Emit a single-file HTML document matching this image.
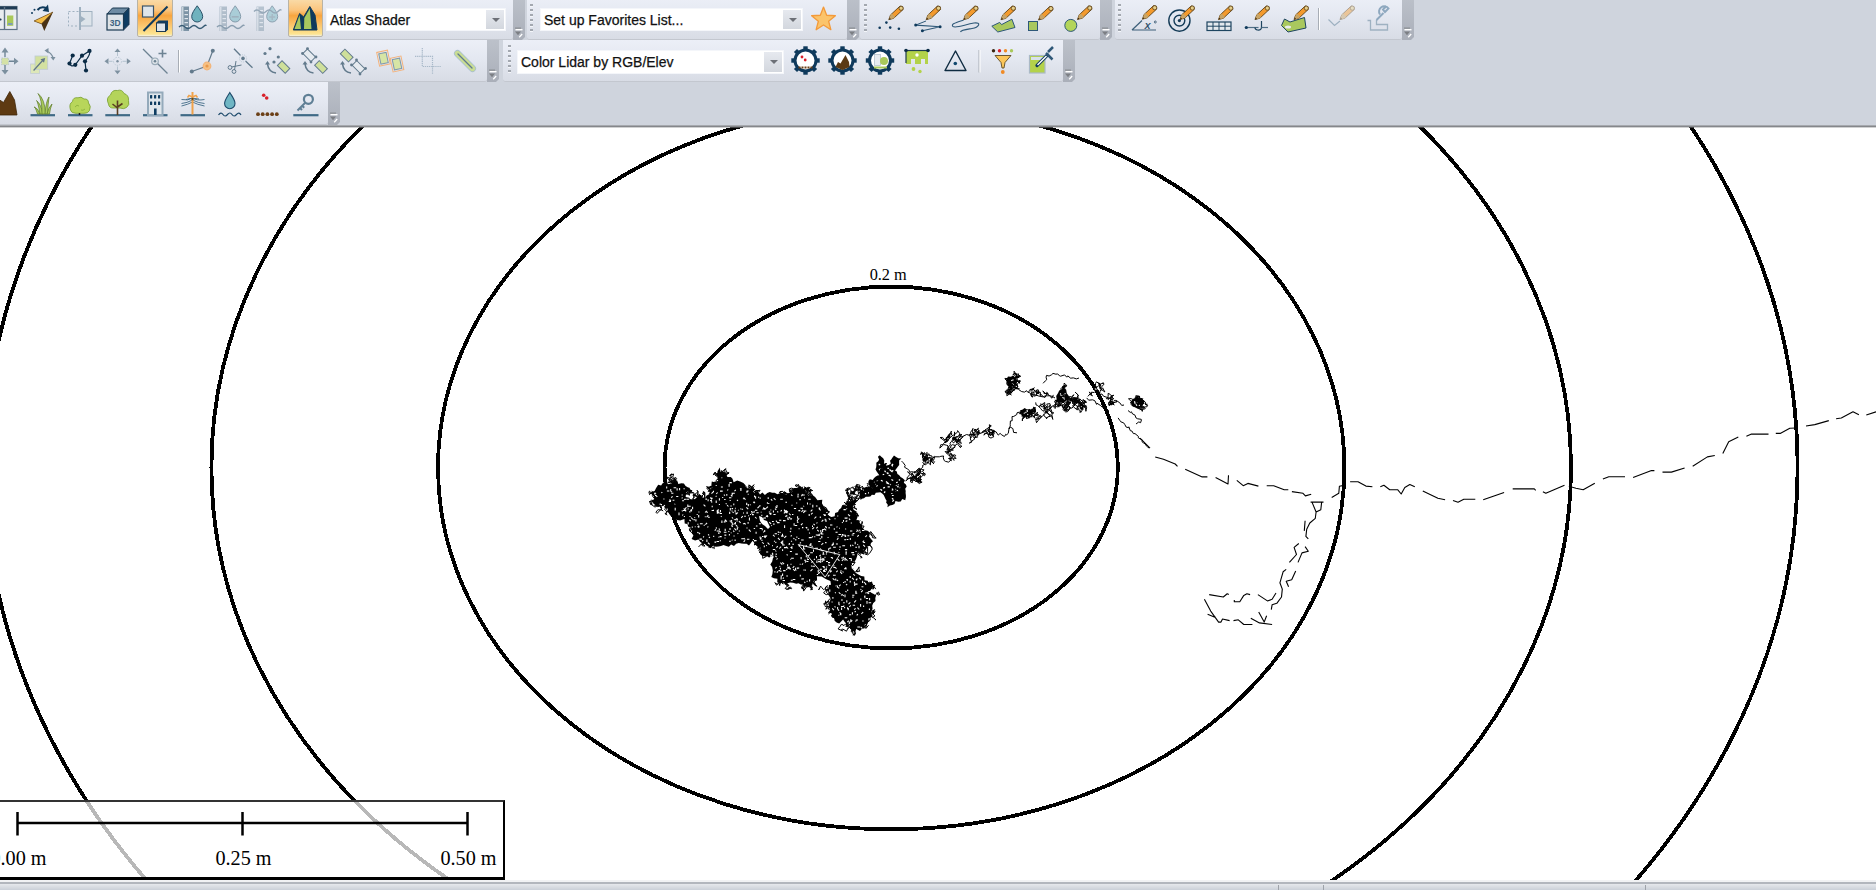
<!DOCTYPE html><html><head><meta charset="utf-8"><style>
*{margin:0;padding:0;box-sizing:border-box}
html,body{width:1876px;height:890px;overflow:hidden;background:#cfd4dd;font-family:"Liberation Sans",sans-serif}
.abs{position:absolute}
.tb{position:absolute;background:linear-gradient(#eceff7,#e4e8f1 45%,#d8dce5);border-bottom:1px solid #c3c7cf;border-radius:0 0 3px 3px}
.chev{position:absolute;background:linear-gradient(#bcc1ca,#aaafb9);clip-path:polygon(0 0,100% 0,100% calc(100% - 3px),calc(100% - 3px) 100%,0 100%)}
.chev svg{position:absolute;left:0;bottom:0}
.grip{position:absolute;width:3px;background:repeating-linear-gradient(#a3a8b0 0 2px,#f4f6fa 2px 3px,transparent 3px 5px)}
.combo{position:absolute;background:#fff;border:1px solid #f4f6fa}
.combo span{position:absolute;left:3px;top:3px;font-size:14px;-webkit-text-stroke:0.25px #111;color:#111;white-space:nowrap}
.combo i{position:absolute;right:1px;top:1px;bottom:1px;width:18px;background:linear-gradient(#e6e9ef,#d3d7de)}
.combo i:after{content:"";position:absolute;left:6px;top:8px;border-left:4px solid transparent;border-right:4px solid transparent;border-top:4px solid #6d7077}
.sep{position:absolute;width:1px;background:#b9bec6;border-right:1px solid #fff}
</style></head><body>
<div class="tb" style="left:-10px;top:-3px;width:523px;height:43px"></div><div class="chev" style="left:513px;top:-3px;width:12px;height:43px"><svg width="12" height="14" viewBox="0 0 12 14"><rect x="2" y="1.5" width="6" height="1.2" fill="#8a8d92"/><rect x="2.5" y="3" width="7" height="1.4" fill="#fff"/><polygon points="2,5.5 8,5.5 5,9.2" fill="#7c7f84"/><path d="M6.2,11.2 L9.2,8" stroke="#fff" stroke-width="1.3"/></svg></div><div class="tb" style="left:527px;top:-3px;width:320px;height:43px"></div><div class="chev" style="left:847px;top:-3px;width:12px;height:43px"><svg width="12" height="14" viewBox="0 0 12 14"><rect x="2" y="1.5" width="6" height="1.2" fill="#8a8d92"/><rect x="2.5" y="3" width="7" height="1.4" fill="#fff"/><polygon points="2,5.5 8,5.5 5,9.2" fill="#7c7f84"/><path d="M6.2,11.2 L9.2,8" stroke="#fff" stroke-width="1.3"/></svg></div><div class="tb" style="left:860px;top:-3px;width:240px;height:43px"></div><div class="chev" style="left:1100px;top:-3px;width:12px;height:43px"><svg width="12" height="14" viewBox="0 0 12 14"><rect x="2" y="1.5" width="6" height="1.2" fill="#8a8d92"/><rect x="2.5" y="3" width="7" height="1.4" fill="#fff"/><polygon points="2,5.5 8,5.5 5,9.2" fill="#7c7f84"/><path d="M6.2,11.2 L9.2,8" stroke="#fff" stroke-width="1.3"/></svg></div><div class="tb" style="left:1115px;top:-3px;width:287px;height:43px"></div><div class="chev" style="left:1402px;top:-3px;width:12px;height:43px"><svg width="12" height="14" viewBox="0 0 12 14"><rect x="2" y="1.5" width="6" height="1.2" fill="#8a8d92"/><rect x="2.5" y="3" width="7" height="1.4" fill="#fff"/><polygon points="2,5.5 8,5.5 5,9.2" fill="#7c7f84"/><path d="M6.2,11.2 L9.2,8" stroke="#fff" stroke-width="1.3"/></svg></div><div class="tb" style="left:-10px;top:40px;width:497px;height:42px"></div><div class="chev" style="left:487px;top:40px;width:12px;height:42px"><svg width="12" height="14" viewBox="0 0 12 14"><rect x="2" y="1.5" width="6" height="1.2" fill="#8a8d92"/><rect x="2.5" y="3" width="7" height="1.4" fill="#fff"/><polygon points="2,5.5 8,5.5 5,9.2" fill="#7c7f84"/><path d="M6.2,11.2 L9.2,8" stroke="#fff" stroke-width="1.3"/></svg></div><div class="tb" style="left:503px;top:40px;width:560px;height:42px"></div><div class="chev" style="left:1063px;top:40px;width:12px;height:42px"><svg width="12" height="14" viewBox="0 0 12 14"><rect x="2" y="1.5" width="6" height="1.2" fill="#8a8d92"/><rect x="2.5" y="3" width="7" height="1.4" fill="#fff"/><polygon points="2,5.5 8,5.5 5,9.2" fill="#7c7f84"/><path d="M6.2,11.2 L9.2,8" stroke="#fff" stroke-width="1.3"/></svg></div><div class="tb" style="left:-10px;top:82px;width:338px;height:43px"></div><div class="chev" style="left:328px;top:82px;width:12px;height:43px"><svg width="12" height="14" viewBox="0 0 12 14"><rect x="2" y="1.5" width="6" height="1.2" fill="#8a8d92"/><rect x="2.5" y="3" width="7" height="1.4" fill="#fff"/><polygon points="2,5.5 8,5.5 5,9.2" fill="#7c7f84"/><path d="M6.2,11.2 L9.2,8" stroke="#fff" stroke-width="1.3"/></svg></div><div class="grip" style="left:530px;top:4px;height:29px"></div><div class="grip" style="left:864px;top:4px;height:29px"></div><div class="grip" style="left:1118px;top:4px;height:29px"></div><div class="grip" style="left:508px;top:45px;height:30px"></div><div class="combo" style="left:326px;top:8px;width:180px;height:23px"><span>Atlas Shader</span><i></i></div><div class="combo" style="left:540px;top:8px;width:263px;height:23px"><span>Set up Favorites List...</span><i></i></div><div class="combo" style="left:517px;top:50px;width:267px;height:24px"><span>Color Lidar by RGB/Elev</span><i></i></div><div class="abs" style="left:137px;top:-2px;width:36px;height:38.5px;border:1px solid #b9b3a5;border-radius:2px;background:linear-gradient(#f9dcaa,#fbc57e 30%,#f8a53f 45%,#fbc46c 70%,#fde591 95%,#f3f0e4)"></div><div class="abs" style="left:287.5px;top:-2px;width:35.5px;height:38.5px;border:1px solid #b9b3a5;border-radius:2px;background:linear-gradient(#f9dcaa,#fbc57e 30%,#f8a53f 45%,#fbc46c 70%,#fde591 95%,#f3f0e4)"></div><svg class="abs" style="left:0;top:0" width="1876" height="127" viewBox="0 0 1876 127"><rect x="-3" y="6.5" width="20" height="23" fill="#e9edf0" stroke="#5f7385" stroke-width="1.2"/><rect x="-3" y="6.5" width="20" height="3" fill="#1f3b55"/><line x1="4.5" y1="7" x2="4.5" y2="29.5" stroke="#5f7385" stroke-width="1.4"/><rect x="7" y="15.5" width="6.3" height="10.3" fill="#a9c95a"/><rect x="8" y="23" width="4.5" height="2" fill="#7d9fb5"/><circle cx="0.5" cy="19.5" r="1.1" fill="#1f3b55"/><polygon points="53,12 34,21 41.5,24 44.3,31" fill="#4a3215"/><polygon points="53,12 34,21 41.5,23.8" fill="#f3bd48" stroke="#6b4a1c" stroke-width="0.6"/><path d="M37.5,10 Q41,6 46,8" fill="none" stroke="#0f3a5c" stroke-width="2"/><polygon points="48,4.5 49,12 42.5,11" fill="#0f3a5c"/><circle cx="32" cy="13" r="1" fill="#0f3a5c"/><circle cx="34.5" cy="9.8" r="1" fill="#0f3a5c"/><rect x="68.5" y="11.5" width="11" height="14.5" fill="none" stroke="#9fb1c0" stroke-width="1" stroke-dasharray="2,2"/><rect x="80.5" y="11.5" width="11.5" height="14.5" fill="#dde4ea" stroke="#9fb1c0" stroke-width="1"/><line x1="80" y1="7" x2="80" y2="30" stroke="#9fb1c0" stroke-width="2"/><polygon points="80,15.5 85.5,19 80,23" fill="#9fb1c0"/><polygon points="107,14 112.5,8 129,8 123.5,14" fill="#6d8ba3" stroke="#1c3a52" stroke-width="1"/><polygon points="123.5,14 129,8 129,24.5 123.5,30" fill="#0f3d62" stroke="#1c3a52" stroke-width="1"/><rect x="107" y="14" width="16.5" height="16" fill="#dde3e8" stroke="#1c3a52" stroke-width="1.2"/><text x="115.2" y="26" font-family="Liberation Sans" font-size="8.5" font-weight="bold" text-anchor="middle" fill="#3c6383">3D</text><rect x="142.5" y="6" width="11" height="11" fill="#dfe5ea" stroke="#3c5569" stroke-width="1.2"/><line x1="143.5" y1="31" x2="167.5" y2="6.5" stroke="#0f3a5c" stroke-width="2"/><polygon points="156,23 158.5,20.5 168,20.5 168,29.5 165.5,32 156,32" fill="#0f3d62"/><rect x="156.5" y="23" width="9" height="8.5" fill="#dfe5ea" stroke="#1c3a52" stroke-width="1"/><g opacity="1.0"><rect x="181.5" y="6.5" width="7.5" height="24.5" fill="#7d94a6"/><rect x="182.2" y="7" width="1.2" height="24" fill="#dfe6ec"/><rect x="184.5" y="10" width="3.5" height="1.2" fill="#dfe6ec"/><rect x="184.5" y="14" width="3.5" height="1.2" fill="#dfe6ec"/><rect x="184.5" y="18" width="3.5" height="1.2" fill="#dfe6ec"/><rect x="184.5" y="22" width="3.5" height="1.2" fill="#dfe6ec"/><rect x="184.5" y="26" width="3.5" height="1.2" fill="#dfe6ec"/><path d="M197.2,5.8 C200.2,10 202.7,13.5 202.7,16.5 A5.5,5.5 0 0 1 191.7,16.5 C191.7,13.5 194.2,10 197.2,5.8 Z" fill="#6fb2be" stroke="#2b5269" stroke-width="1"/><path d="M179,27 Q182,24 185,27 T191,27 T197,27 T203,27 T206,26" fill="none" stroke="#365a73" stroke-width="1.4"/></g><g opacity="0.5"><rect x="219.5" y="6.5" width="7.5" height="24.5" fill="#7d94a6"/><rect x="220.2" y="7" width="1.2" height="24" fill="#dfe6ec"/><rect x="222.5" y="10" width="3.5" height="1.2" fill="#dfe6ec"/><rect x="222.5" y="14" width="3.5" height="1.2" fill="#dfe6ec"/><rect x="222.5" y="18" width="3.5" height="1.2" fill="#dfe6ec"/><rect x="222.5" y="22" width="3.5" height="1.2" fill="#dfe6ec"/><rect x="222.5" y="26" width="3.5" height="1.2" fill="#dfe6ec"/><path d="M235.2,5.8 C238.2,10 240.7,13.5 240.7,16.5 A5.5,5.5 0 0 1 229.7,16.5 C229.7,13.5 232.2,10 235.2,5.8 Z" fill="#6fb2be" stroke="#2b5269" stroke-width="1"/><rect x="231.7" y="16" width="7" height="1.6" fill="#5d7f8f"/><path d="M217,27 Q220,24 223,27 T229,27 T235,27 T241,27 T244,26" fill="none" stroke="#365a73" stroke-width="1.4"/></g><g opacity="0.45"><rect x="256.5" y="6.5" width="7.5" height="24.5" fill="#7d94a6"/><rect x="257.2" y="7" width="1.2" height="24" fill="#dfe6ec"/><rect x="259.5" y="10" width="3.5" height="1.2" fill="#dfe6ec"/><rect x="259.5" y="14" width="3.5" height="1.2" fill="#dfe6ec"/><rect x="259.5" y="18" width="3.5" height="1.2" fill="#dfe6ec"/><rect x="259.5" y="22" width="3.5" height="1.2" fill="#dfe6ec"/><rect x="259.5" y="26" width="3.5" height="1.2" fill="#dfe6ec"/><path d="M272.2,5.8 C275.2,10 277.7,13.5 277.7,16.5 A5.5,5.5 0 0 1 266.7,16.5 C266.7,13.5 269.2,10 272.2,5.8 Z" fill="#6fb2be" stroke="#2b5269" stroke-width="1"/><path d="M269.2,17 H275.2 M272.2,14 V20" stroke="#5d7f8f" stroke-width="1.4"/><path d="M254,11.5 Q257,8.5 260,11.5 T266,11.5 T272,11.5 T278,11.5 T281,10.5" fill="none" stroke="#365a73" stroke-width="1.4"/></g><polygon points="293.3,30 299.6,13.5 303.7,17 309.8,6.5 315,15 317,30" fill="#0f3a5c" stroke="#0f3a5c" stroke-width="1"/><polygon points="294.5,29 299.6,15 301,29" fill="#a9c85e"/><polygon points="304,29 304.3,18 309.8,8.5 311.5,29" fill="#a9c85e"/><polygon points="823.50,7.10 826.67,15.23 835.39,15.74 828.64,21.27 830.85,29.71 823.50,25.00 816.15,29.71 818.36,21.27 811.61,15.74 820.33,15.23" fill="#fbc46b" stroke="#f39a3a" stroke-width="1.3" stroke-linejoin="round"/><g fill="#0f3a5c"><circle cx="879.7" cy="27.8" r="1.3"/><circle cx="886.4" cy="22.6" r="1.3"/><circle cx="890.2" cy="27.6" r="1.3"/><circle cx="898.9" cy="28.8" r="1.3"/></g><g opacity="1.0"><polygon points="888.80,19.70 890.52,14.95 900.03,6.08 902.70,6.74 903.17,9.45 893.66,18.31" fill="#f39a2d" stroke="#5e4319" stroke-width="0.9"/><polygon points="889.02,19.50 890.52,14.95 891.99,13.58 895.12,16.95 893.66,18.31" fill="#c9a566" stroke="none"/><circle cx="901.09" cy="8.24" r="2.1" fill="#e6cf8a" stroke="#5e4319" stroke-width="0.8"/><polygon points="888.80,19.70 889.65,17.68 890.88,18.99" fill="#3b2a10"/></g><polyline points="915.7,25.1 940.1,26.7 922.4,30.7" fill="none" stroke="#2e5878" stroke-width="1.1"/><path d="M915.7,25.1 L926,21" stroke="#2e5878" stroke-width="1"/><g fill="#0f3a5c"><circle cx="915.7" cy="25.1" r="1.5"/><circle cx="940.1" cy="26.7" r="1.5"/><circle cx="922.4" cy="30.7" r="1.5"/></g><g opacity="1.0"><polygon points="926.20,19.70 927.92,14.95 937.43,6.08 940.10,6.74 940.57,9.45 931.06,18.31" fill="#f39a2d" stroke="#5e4319" stroke-width="0.9"/><polygon points="926.42,19.50 927.92,14.95 929.39,13.58 932.52,16.95 931.06,18.31" fill="#c9a566" stroke="none"/><circle cx="938.49" cy="8.24" r="2.1" fill="#e6cf8a" stroke="#5e4319" stroke-width="0.8"/><polygon points="926.20,19.70 927.05,17.68 928.28,18.99" fill="#3b2a10"/></g><path d="M963.6,20 C958,22 950,24 953,26.5 C956,28.5 965,24.5 974,23 C982,22 979,27.5 972,28.5 C966,29.5 961,30 960.5,32" fill="none" stroke="#2e5878" stroke-width="1.1"/><g opacity="1.0"><polygon points="963.60,19.70 965.32,14.95 974.83,6.08 977.50,6.74 977.97,9.45 968.46,18.31" fill="#f39a2d" stroke="#5e4319" stroke-width="0.9"/><polygon points="963.82,19.50 965.32,14.95 966.79,13.58 969.92,16.95 968.46,18.31" fill="#c9a566" stroke="none"/><circle cx="975.89" cy="8.24" r="2.1" fill="#e6cf8a" stroke="#5e4319" stroke-width="0.8"/><polygon points="963.60,19.70 964.45,17.68 965.68,18.99" fill="#3b2a10"/></g><polygon points="991.8,26.2 999.7,22.4 1001.6,24.6 1011.9,19.2 1015,27.5 997.8,32" fill="#a9c85e" stroke="#2e5878" stroke-width="1" stroke-linejoin="round"/><g opacity="1.0"><polygon points="1001.00,19.70 1002.72,14.95 1012.23,6.08 1014.90,6.74 1015.37,9.45 1005.86,18.31" fill="#f39a2d" stroke="#5e4319" stroke-width="0.9"/><polygon points="1001.22,19.50 1002.72,14.95 1004.19,13.58 1007.32,16.95 1005.86,18.31" fill="#c9a566" stroke="none"/><circle cx="1013.29" cy="8.24" r="2.1" fill="#e6cf8a" stroke="#5e4319" stroke-width="0.8"/><polygon points="1001.00,19.70 1001.85,17.68 1003.08,18.99" fill="#3b2a10"/></g><rect x="1028.5" y="21.5" width="9" height="9" fill="#a9c85e" stroke="#2e5878" stroke-width="1"/><g opacity="1.0"><polygon points="1038.60,20.00 1040.32,15.25 1049.83,6.38 1052.50,7.04 1052.97,9.75 1043.46,18.61" fill="#f39a2d" stroke="#5e4319" stroke-width="0.9"/><polygon points="1038.82,19.80 1040.32,15.25 1041.79,13.88 1044.92,17.25 1043.46,18.61" fill="#c9a566" stroke="none"/><circle cx="1050.89" cy="8.54" r="2.1" fill="#e6cf8a" stroke="#5e4319" stroke-width="0.8"/><polygon points="1038.60,20.00 1039.45,17.98 1040.68,19.29" fill="#3b2a10"/></g><circle cx="1070.8" cy="25.4" r="6" fill="#b3d55a" stroke="#2e5878" stroke-width="1"/><g opacity="1.0"><polygon points="1077.50,19.50 1079.22,14.75 1088.73,5.88 1091.40,6.54 1091.87,9.25 1082.36,18.11" fill="#f39a2d" stroke="#5e4319" stroke-width="0.9"/><polygon points="1077.72,19.30 1079.22,14.75 1080.69,13.38 1083.82,16.75 1082.36,18.11" fill="#c9a566" stroke="none"/><circle cx="1089.79" cy="8.04" r="2.1" fill="#e6cf8a" stroke="#5e4319" stroke-width="0.8"/><polygon points="1077.50,19.50 1078.35,17.48 1079.58,18.79" fill="#3b2a10"/></g><path d="M1132,30 H1156 M1132,30 L1142,20.5" stroke="#3d5f79" stroke-width="1.2" fill="none"/><text x="1144.5" y="29" font-family="Liberation Sans" font-size="9" font-style="italic" font-weight="bold" fill="#2d4f69">X</text><circle cx="1155.3" cy="22" r="1" fill="none" stroke="#2d4f69" stroke-width="0.8"/><g opacity="1.0"><polygon points="1142.40,19.20 1144.12,14.45 1153.63,5.58 1156.30,6.24 1156.77,8.95 1147.26,17.81" fill="#f39a2d" stroke="#5e4319" stroke-width="0.9"/><polygon points="1142.62,19.00 1144.12,14.45 1145.59,13.08 1148.72,16.45 1147.26,17.81" fill="#c9a566" stroke="none"/><circle cx="1154.69" cy="7.74" r="2.1" fill="#e6cf8a" stroke="#5e4319" stroke-width="0.8"/><polygon points="1142.40,19.20 1143.25,17.18 1144.48,18.49" fill="#3b2a10"/></g><circle cx="1179.4" cy="20.6" r="10.6" fill="none" stroke="#143b57" stroke-width="1.4"/><circle cx="1179.4" cy="20.6" r="5.4" fill="none" stroke="#143b57" stroke-width="1.4"/><circle cx="1179.4" cy="20.6" r="1.6" fill="#143b57"/><g opacity="1.0"><polygon points="1180.00,19.50 1181.72,14.75 1191.23,5.88 1193.90,6.54 1194.37,9.25 1184.86,18.11" fill="#f39a2d" stroke="#5e4319" stroke-width="0.9"/><polygon points="1180.22,19.30 1181.72,14.75 1183.19,13.38 1186.32,16.75 1184.86,18.11" fill="#c9a566" stroke="none"/><circle cx="1192.29" cy="8.04" r="2.1" fill="#e6cf8a" stroke="#5e4319" stroke-width="0.8"/><polygon points="1180.00,19.50 1180.85,17.48 1182.08,18.79" fill="#3b2a10"/></g><rect x="1207" y="22" width="24" height="8.5" fill="#e4e9ee" stroke="#1e4560" stroke-width="1.2"/><path d="M1213,22 V30.5 M1219,22 V30.5 M1225,22 V30.5 M1207,26.2 H1231" stroke="#1e4560" stroke-width="1"/><g opacity="1.0"><polygon points="1218.50,19.60 1220.22,14.85 1229.73,5.98 1232.40,6.64 1232.87,9.35 1223.36,18.21" fill="#f39a2d" stroke="#5e4319" stroke-width="0.9"/><polygon points="1218.72,19.40 1220.22,14.85 1221.69,13.48 1224.82,16.85 1223.36,18.21" fill="#c9a566" stroke="none"/><circle cx="1230.79" cy="8.14" r="2.1" fill="#e6cf8a" stroke="#5e4319" stroke-width="0.8"/><polygon points="1218.50,19.60 1219.35,17.58 1220.58,18.89" fill="#3b2a10"/></g><path d="M1245.5,27.5 H1258.5" stroke="#4f6f86" stroke-width="1.2"/><circle cx="1246.3" cy="27.5" r="1.6" fill="#0f3a5c"/><path d="M1261.5,21 V27 Q1261.5,30.5 1257.5,30 Q1255,29.5 1255,27.5" fill="none" stroke="#1e4560" stroke-width="1.2"/><path d="M1261.5,27.5 H1268" stroke="#4f6f86" stroke-width="1.2"/><g opacity="1.0"><polygon points="1255.00,19.60 1256.72,14.85 1266.23,5.98 1268.90,6.64 1269.37,9.35 1259.86,18.21" fill="#f39a2d" stroke="#5e4319" stroke-width="0.9"/><polygon points="1255.22,19.40 1256.72,14.85 1258.19,13.48 1261.32,16.85 1259.86,18.21" fill="#c9a566" stroke="none"/><circle cx="1267.29" cy="8.14" r="2.1" fill="#e6cf8a" stroke="#5e4319" stroke-width="0.8"/><polygon points="1255.00,19.60 1255.85,17.58 1257.08,18.89" fill="#3b2a10"/></g><polygon points="1281.5,25.5 1284.5,19 1290,22 1304.5,17.5 1306,28 1288,32" fill="#a9c85e" stroke="#1e4560" stroke-width="1"/><ellipse cx="1288" cy="27" rx="3" ry="1.5" fill="#e8ecef"/><g opacity="1.0"><polygon points="1294.00,19.60 1295.72,14.85 1305.23,5.98 1307.90,6.64 1308.37,9.35 1298.86,18.21" fill="#f39a2d" stroke="#5e4319" stroke-width="0.9"/><polygon points="1294.22,19.40 1295.72,14.85 1297.19,13.48 1300.32,16.85 1298.86,18.21" fill="#c9a566" stroke="none"/><circle cx="1306.29" cy="8.14" r="2.1" fill="#e6cf8a" stroke="#5e4319" stroke-width="0.8"/><polygon points="1294.00,19.60 1294.85,17.58 1296.08,18.89" fill="#3b2a10"/></g><line x1="1318.5" y1="8" x2="1318.5" y2="30" stroke="#a7adb5" stroke-width="1"/><line x1="1319.5" y1="8" x2="1319.5" y2="30" stroke="#fff" stroke-width="1"/><path d="M1328.5,19.5 L1334.5,25.5 L1340,21" fill="none" stroke="#9eb1c1" stroke-width="1.2"/><g opacity="0.45"><polygon points="1340.00,19.60 1341.72,14.85 1351.23,5.98 1353.90,6.64 1354.37,9.35 1344.86,18.21" fill="#f39a2d" stroke="#5e4319" stroke-width="0.9"/><polygon points="1340.22,19.40 1341.72,14.85 1343.19,13.48 1346.32,16.85 1344.86,18.21" fill="#c9a566" stroke="none"/><circle cx="1352.29" cy="8.14" r="2.1" fill="#e6cf8a" stroke="#5e4319" stroke-width="0.8"/><polygon points="1340.00,19.60 1340.85,17.58 1342.08,18.89" fill="#3b2a10"/></g><path d="M1367.5,20.5 H1370.5 V30 H1387.5 V24.5 H1376.5 V20" fill="none" stroke="#9eb1c1" stroke-width="1.3"/><path d="M1376.5,20 L1383.5,13 M1386.5,6 L1383,9.5 L1385,12 L1388.5,8.5 A4,4 0 0 0 1380,14.5" fill="none" stroke="#8ea8bf" stroke-width="2"/><rect x="1.6" y="58" width="7" height="6.7" fill="#d5e2a6" stroke="#aebfcc" stroke-width="0.8" stroke-dasharray="1.5,1"/><path d="M5,52 V57 M5,65 V70 M9,61.3 H14" stroke="#6f8596" stroke-width="1.4"/><polygon points="1.5,52.5 5,47.5 8.5,52.5" fill="#7b8f9e"/><polygon points="1.5,70 5,74.5 8.5,70" fill="#7b8f9e"/><polygon points="14,57.8 18.5,61.3 14,64.8" fill="#7b8f9e"/><rect x="30.6" y="64" width="9" height="9.5" fill="#dde7b8" stroke="#c2ccd4" stroke-width="0.8"/><rect x="35" y="56" width="12.7" height="13.3" fill="#d3e1a0" stroke="#bfcad3" stroke-width="0.8"/><path d="M33.6,70.5 L43.5,59.5" stroke="#5f7587" stroke-width="1.2"/><polygon points="45.2,58 40.5,59.2 44,62.7" fill="#5f7587"/><path d="M46.5,51 Q51.5,53 53,57.5" fill="none" stroke="#7b8f9e" stroke-width="1.3"/><polygon points="44.5,50.5 48.5,48 48.5,53.5" fill="#7b8f9e"/><polygon points="50.5,57 55.5,57 53.3,60.5" fill="#7b8f9e"/><path d="M72.7,55.5 L69.5,63.5 Q71,67.5 75.3,64.8 L82,55.7 L89.5,50.9 Q91,54 85,61.3 L86,70.5" fill="none" stroke="#0a2b45" stroke-width="1.2"/><g fill="#0a2b45"><circle cx="72.7" cy="55.5" r="2.1"/><circle cx="69.5" cy="63.5" r="2.1"/><circle cx="75.3" cy="64.8" r="2.1"/><circle cx="82" cy="55.7" r="2.1"/><circle cx="89.5" cy="50.9" r="2.1"/><circle cx="85" cy="61.3" r="2.1"/><circle cx="86" cy="70.5" r="2.1"/></g><g fill="#6d8393" opacity="0.85"><polygon points="114.5,52 117.5,48.5 120.5,52"/><polygon points="114.5,70.5 117.5,74.3 120.5,70.5"/><polygon points="108.5,58.3 104.5,61.3 108.5,64.3"/><polygon points="126.8,58.3 130.8,61.3 126.8,64.3"/><circle cx="117.5" cy="61.3" r="1.2"/></g><circle cx="117.5" cy="61.3" r="4" fill="none" stroke="#b4c3cf" stroke-width="0.8" stroke-dasharray="1.5,1.2"/><path d="M117.5,52 V56 M117.5,66.5 V70.5 M108.5,61.3 H112.5 M122.5,61.3 H126.8" stroke="#b4c3cf" stroke-width="1"/><path d="M143,49 L167.5,73.5" stroke="#6d8393" stroke-width="1.2"/><circle cx="155" cy="61.3" r="3.3" fill="#dfe5ea" stroke="#9aabb8" stroke-width="1.2"/><circle cx="155" cy="61.3" r="1.3" fill="#6d8393"/><path d="M158.5,53.5 H166.5 M162.5,49.5 V57.5" stroke="#6d8393" stroke-width="1.6"/><line x1="178.5" y1="50" x2="178.5" y2="72.5" stroke="#a7adb5" stroke-width="1"/><line x1="179.5" y1="50" x2="179.5" y2="72.5" stroke="#fff" stroke-width="1"/><path d="M191.8,71.5 L207,66 L212.8,50.7" fill="none" stroke="#627a8c" stroke-width="1.2"/><circle cx="191.8" cy="71.5" r="2" fill="#627a8c"/><circle cx="212.8" cy="50.7" r="2" fill="#627a8c"/><circle cx="207" cy="66" r="3.8" fill="#f6c184" stroke="#f3b477" stroke-width="1.2"/><circle cx="207" cy="66" r="1.6" fill="#e99a4c"/><path d="M234,48.8 L240.5,55.5 M245.5,61 L252.5,67.7" stroke="#627a8c" stroke-width="1.3"/><circle cx="243" cy="58.4" r="1.8" fill="#627a8c"/><circle cx="243" cy="58.4" r="3.6" fill="none" stroke="#b4c3cf" stroke-width="0.8" stroke-dasharray="1.2,1"/><path d="M231.5,67 L241.5,65 M234.5,70 L236,61" stroke="#627a8c" stroke-width="1"/><circle cx="230" cy="67.5" r="1.9" fill="none" stroke="#627a8c" stroke-width="1"/><circle cx="234" cy="71.5" r="1.9" fill="none" stroke="#627a8c" stroke-width="1"/><g fill="#627a8c"><circle cx="265" cy="53.5" r="1.6"/><circle cx="270" cy="48.7" r="1.6"/><circle cx="278.3" cy="57" r="1.6"/><circle cx="274" cy="62" r="1.6"/></g><path d="M276.0,73 Q268.5,72 267.5,64" fill="none" stroke="#627a8c" stroke-width="1.6"/><polygon points="265.0,64.5 267.5,61 270.0,64.5" fill="#627a8c"/><rect x="280.35" y="61.5" width="6.5" height="11" fill="#cfe09a" stroke="#627a8c" stroke-width="1" transform="rotate(-45 283.6 67)"/><rect x="305.95" y="49.55" width="6.5" height="11.5" fill="#e6ebf0" stroke="#627a8c" stroke-width="1" transform="rotate(-45 309.2 55.3)"/><circle cx="307.5" cy="48.6" r="1.4" fill="#627a8c"/><circle cx="302.5" cy="53.5" r="1.4" fill="#627a8c"/><circle cx="311" cy="62" r="1.4" fill="#627a8c"/><circle cx="316" cy="57" r="1.4" fill="#627a8c"/><path d="M313.5,73 Q306,72 305,64" fill="none" stroke="#627a8c" stroke-width="1.6"/><polygon points="302.5,64.5 305,61 307.5,64.5" fill="#627a8c"/><rect x="317.75" y="61.25" width="6.5" height="11.5" fill="#cfe09a" stroke="#627a8c" stroke-width="1" transform="rotate(-45 321 67)"/><rect x="343.45" y="49.75" width="6.5" height="11.5" fill="#cfe09a" stroke="#627a8c" stroke-width="1" transform="rotate(-45 346.7 55.5)"/><rect x="355.25" y="61.25" width="6.5" height="11.5" fill="#e6ebf0" stroke="#627a8c" stroke-width="1" transform="rotate(-45 358.5 67)"/><circle cx="351.5" cy="65" r="1.4" fill="#627a8c"/><circle cx="356.5" cy="60" r="1.4" fill="#627a8c"/><circle cx="365.5" cy="68.5" r="1.4" fill="#627a8c"/><circle cx="360" cy="74" r="1.4" fill="#627a8c"/><path d="M351.0,73 Q343.5,72 342.5,64" fill="none" stroke="#627a8c" stroke-width="1.6"/><polygon points="340.0,64.5 342.5,61 345.0,64.5" fill="#627a8c"/><rect x="378.0" y="51.2" width="11" height="14" fill="none" stroke="#f4b27a" stroke-width="1" transform="rotate(-12 383.5 58.2)"/><rect x="379.75" y="52.95" width="7.5" height="10.5" fill="#d7e5a5" stroke="#7f97aa" stroke-width="1" transform="rotate(-12 383.5 58.2)"/><rect x="391.5" y="57.0" width="11" height="14" fill="none" stroke="#f4b27a" stroke-width="1" transform="rotate(-12 397 64)"/><rect x="393.25" y="58.75" width="7.5" height="10.5" fill="#d7e5a5" stroke="#7f97aa" stroke-width="1" transform="rotate(-12 397 64)"/><path d="M422.3,48 V66.5 H441 M415,56.3 H432.5 V74" fill="none" stroke="#a9b9c9" stroke-width="1.2" stroke-dasharray="1.3,0.8"/><path d="M457.5,53.5 L472.5,68.5" stroke="#a8bfd0" stroke-width="7" stroke-linecap="round"/><path d="M457.5,53.5 L472.5,68.5" stroke="#c9dd94" stroke-width="5.4" stroke-linecap="round"/><path d="M458,54 L472,68" stroke="#5f7a8d" stroke-width="1.3" stroke-linecap="round"/><rect x="815.30" y="58.30" width="4.4" height="4.4" fill="#0f3a5c" transform="rotate(0 817.50 60.50)"/><rect x="811.79" y="66.79" width="4.4" height="4.4" fill="#0f3a5c" transform="rotate(45 813.99 68.99)"/><rect x="803.30" y="70.30" width="4.4" height="4.4" fill="#0f3a5c" transform="rotate(90 805.50 72.50)"/><rect x="794.81" y="66.79" width="4.4" height="4.4" fill="#0f3a5c" transform="rotate(135 797.01 68.99)"/><rect x="791.30" y="58.30" width="4.4" height="4.4" fill="#0f3a5c" transform="rotate(180 793.50 60.50)"/><rect x="794.81" y="49.81" width="4.4" height="4.4" fill="#0f3a5c" transform="rotate(225 797.01 52.01)"/><rect x="803.30" y="46.30" width="4.4" height="4.4" fill="#0f3a5c" transform="rotate(270 805.50 48.50)"/><rect x="811.79" y="49.81" width="4.4" height="4.4" fill="#0f3a5c" transform="rotate(315 813.99 52.01)"/><circle cx="805.5" cy="60.5" r="10.5" fill="#fff" stroke="#0f3a5c" stroke-width="3"/><circle cx="802" cy="57" r="1.4" fill="#d8202a"/><circle cx="805.2" cy="60" r="1.4" fill="#d8202a"/><path d="M798.5,67.5 H812.5" stroke="#6b3f16" stroke-width="2" stroke-dasharray="2,1"/><rect x="852.30" y="58.30" width="4.4" height="4.4" fill="#0f3a5c" transform="rotate(0 854.50 60.50)"/><rect x="848.79" y="66.79" width="4.4" height="4.4" fill="#0f3a5c" transform="rotate(45 850.99 68.99)"/><rect x="840.30" y="70.30" width="4.4" height="4.4" fill="#0f3a5c" transform="rotate(90 842.50 72.50)"/><rect x="831.81" y="66.79" width="4.4" height="4.4" fill="#0f3a5c" transform="rotate(135 834.01 68.99)"/><rect x="828.30" y="58.30" width="4.4" height="4.4" fill="#0f3a5c" transform="rotate(180 830.50 60.50)"/><rect x="831.81" y="49.81" width="4.4" height="4.4" fill="#0f3a5c" transform="rotate(225 834.01 52.01)"/><rect x="840.30" y="46.30" width="4.4" height="4.4" fill="#0f3a5c" transform="rotate(270 842.50 48.50)"/><rect x="848.79" y="49.81" width="4.4" height="4.4" fill="#0f3a5c" transform="rotate(315 850.99 52.01)"/><circle cx="842.5" cy="60.5" r="10.5" fill="#fff" stroke="#0f3a5c" stroke-width="3"/><polygon points="835.5,67 838,62 840.5,63.5 845.5,55 849,62 849.5,67 842.5,70" fill="#5b3a14"/><rect x="889.80" y="58.30" width="4.4" height="4.4" fill="#0f3a5c" transform="rotate(0 892.00 60.50)"/><rect x="886.29" y="66.79" width="4.4" height="4.4" fill="#0f3a5c" transform="rotate(45 888.49 68.99)"/><rect x="877.80" y="70.30" width="4.4" height="4.4" fill="#0f3a5c" transform="rotate(90 880.00 72.50)"/><rect x="869.31" y="66.79" width="4.4" height="4.4" fill="#0f3a5c" transform="rotate(135 871.51 68.99)"/><rect x="865.80" y="58.30" width="4.4" height="4.4" fill="#0f3a5c" transform="rotate(180 868.00 60.50)"/><rect x="869.31" y="49.81" width="4.4" height="4.4" fill="#0f3a5c" transform="rotate(225 871.51 52.01)"/><rect x="877.80" y="46.30" width="4.4" height="4.4" fill="#0f3a5c" transform="rotate(270 880.00 48.50)"/><rect x="886.29" y="49.81" width="4.4" height="4.4" fill="#0f3a5c" transform="rotate(315 888.49 52.01)"/><circle cx="880" cy="60.5" r="10.5" fill="#fff" stroke="#0f3a5c" stroke-width="3"/><rect x="874.5" y="54.5" width="6" height="11" fill="#e6ebf0" stroke="#9fb1c0" stroke-width="0.6"/><circle cx="884" cy="61" r="4" fill="#a9c95a"/><path d="M874,67.5 H887" stroke="#a9c95a" stroke-width="2"/><path d="M906,50.5 H928 V64 H925 V59 H921 V64 H915 V59 H911 V64 H906 Z" fill="#b3d24a" stroke="none"/><path d="M906,50.5 H928" stroke="#1d3a4e" stroke-width="1.2"/><circle cx="906" cy="50.5" r="1.8" fill="#0a2b45"/><circle cx="928" cy="50.5" r="1.8" fill="#0a2b45"/><circle cx="917" cy="55" r="1.7" fill="#fff"/><circle cx="913.5" cy="69" r="1.9" fill="#b3d24a"/><circle cx="920" cy="71.5" r="1.7" fill="#b3d24a"/><path d="M906,51 V63" stroke="#1d3a4e" stroke-width="1.2"/><polygon points="955.5,51 945,70.5 966,70.5" fill="none" stroke="#0e2b40" stroke-width="1.4" stroke-linejoin="round"/><circle cx="955.3" cy="63.5" r="1.8" fill="#11486e"/><line x1="979" y1="50" x2="979" y2="72.5" stroke="#a7adb5" stroke-width="1"/><line x1="980" y1="50" x2="980" y2="72.5" stroke="#fff" stroke-width="1"/><circle cx="993.5" cy="50.8" r="1.7" fill="#3b2510"/><circle cx="999.5" cy="50.8" r="1.7" fill="#d8202a"/><circle cx="1005.5" cy="50.8" r="1.7" fill="#f08a24"/><circle cx="1011.5" cy="50.8" r="1.7" fill="#a9c95a"/><polygon points="995,55.5 1011,55.5 1005,62.5 1004,68 1002,68 1001,62.5" fill="#fbc65a" stroke="#5e4a22" stroke-width="0.9"/><circle cx="1002.8" cy="72" r="1.9" fill="#f08a24"/><rect x="1029.5" y="55.5" width="15.5" height="17.5" fill="#b3d24a" stroke="#aab9c6" stroke-width="1.2"/><rect x="1031" y="57" width="12.5" height="3" fill="#d8e2ea"/><path d="M1037,65.5 L1047.5,55" stroke="#0f3a5c" stroke-width="3.2" stroke-linecap="round"/><path d="M1037.5,65 L1046.5,56" stroke="#fff" stroke-width="1.4"/><path d="M1046,53 L1052.5,59.5 M1048,52 L1053,47" stroke="#2f5878" stroke-width="2.5"/><polygon points="-1,99.5 3.5,102.5 9.8,91.5 14.5,100 17,115 -1,115" fill="#5e3a12" stroke="#3d2408" stroke-width="0.8"/><path d="M30.5,115.2 H55" stroke="#3f6a86" stroke-width="2.2"/><path d="M68,115.2 H92.5" stroke="#3f6a86" stroke-width="2.2"/><path d="M105.3,115.2 H130" stroke="#3f6a86" stroke-width="2.2"/><path d="M143,115.2 H167.5" stroke="#3f6a86" stroke-width="2.2"/><path d="M180.5,115.2 H205" stroke="#3f6a86" stroke-width="2.2"/><path d="M293.3,115.2 H318.5" stroke="#3f6a86" stroke-width="2.2"/><g fill="#a8c95a" stroke="#5c7a2a" stroke-width="0.7"><path d="M37.5,114 Q35,106 34,107 Q38,108 40,114 Z"/><path d="M40,114 Q38,102 36.5,100.5 Q41,104 43,114 Z"/><path d="M42,114 Q42,99 38,93.5 Q45,99 45.5,114 Z"/><path d="M45,114 Q46,101 49,97 Q48,104 47.5,114 Z"/><path d="M47,114 Q48,108 52,104 Q50,109 49.5,114 Z"/></g><path d="M70.5,110 Q68.5,104 72.5,101.5 Q73,97 78,97.8 Q81,96 84,99 Q88.5,98.5 88.5,103 Q91.5,106 89.5,110.5 Q88,113.5 84,113.3 L76,113.3 Q71.5,113.5 70.5,110 Z" fill="#b8d65a" stroke="#77a02e" stroke-width="0.8"/><path d="M79.5,113 V115" stroke="#222" stroke-width="1.5"/><path d="M75,107 Q77,104 79,106 M81,110 Q83,111 85,109" fill="none" stroke="#77a02e" stroke-width="0.6"/><path d="M108.5,104 Q105.5,98 110.5,95 Q112,89.5 117.5,90.5 Q122,89 124,93.5 Q129,95 128.5,100.5 Q130,105 126.5,107.5 Q124,109.5 120,108 L114,108 Q109,108.5 108.5,104 Z" fill="#b4d45a" stroke="#77a02e" stroke-width="0.8"/><path d="M117.5,115 V100.5 M117.5,108 L112.5,104 M117.5,107 L122.5,103.5" stroke="#5a3e22" stroke-width="1.6" fill="none"/><rect x="148" y="92.5" width="14.5" height="22.5" fill="#dfe6ec" stroke="#94aabb" stroke-width="2"/><g fill="#0f3d62"><rect x="150" y="95" width="2.2" height="3.5" rx="0.6"/><rect x="150" y="101.5" width="2.2" height="3.5" rx="0.6"/><rect x="154" y="95" width="2.2" height="3.5" rx="0.6"/><rect x="154" y="101.5" width="2.2" height="3.5" rx="0.6"/><rect x="158" y="95" width="2.2" height="3.5" rx="0.6"/><rect x="158" y="101.5" width="2.2" height="3.5" rx="0.6"/><rect x="154" y="108.5" width="2.6" height="6.5"/></g><path d="M186,99.5 Q192,97 199,99 M181.5,99.5 Q188,101 192.5,98 Q197,101 204.5,99.5 M181.5,103.5 Q187,103 192.5,100 Q198,103 204.5,103.5 M181.5,106 Q188,104.5 192.5,102 Q197,104.5 204.5,106" fill="none" stroke="#3f6a86" stroke-width="0.9"/><path d="M192.5,92 V114.5" stroke="#f0a24a" stroke-width="2"/><path d="M187.5,97.5 L189,95.5 L192.5,97 L196,95.5 L197.5,97.5" fill="none" stroke="#f0a24a" stroke-width="1.5"/><circle cx="192.5" cy="99" r="1.2" fill="#5e4a22"/><path d="M229.8,92.5 C232.5,97 235,100 235,103.5 A5.2,5.2 0 0 1 224.6,103.5 C224.6,100 227,97 229.8,92.5 Z" fill="#6fb6c4" stroke="#1d4a6b" stroke-width="1.1"/><path d="M218.5,115 Q221,111.5 223,114.5 T227.5,114.5 T232,114.5 T236.5,114.5 T241,115" fill="none" stroke="#1d4a6b" stroke-width="1.2"/><circle cx="263.7" cy="95.3" r="1.8" fill="#d8202a"/><circle cx="266.7" cy="98" r="1.8" fill="#d8202a"/><g fill="#6b3f16"><circle cx="258" cy="114.2" r="1.9"/><circle cx="262.7" cy="114.2" r="1.9"/><circle cx="267.4" cy="114.2" r="1.9"/><circle cx="272.1" cy="114.2" r="1.9"/><circle cx="276.8" cy="114.2" r="1.9"/></g><circle cx="308.4" cy="99.3" r="4.5" fill="none" stroke="#5f7f95" stroke-width="2.2"/><path d="M305.2,102.8 L297.5,110.5 M300,108 L302,110 M302.2,105.8 L304.2,107.8" stroke="#5f7f95" stroke-width="2" fill="none"/></svg>
<div class="abs" style="left:0;top:127px;width:1876px;height:753px;background:#fff;overflow:hidden">
<svg class="abs" style="left:0;top:-127px" width="1876" height="890" viewBox="0 0 1876 890"><ellipse cx="891.2" cy="467.5" rx="226.6" ry="180.9" fill="none" stroke="#000" stroke-width="3.8" shape-rendering="crispEdges"/><ellipse cx="891.2" cy="467.5" rx="453.2" ry="361.8" fill="none" stroke="#000" stroke-width="3.8" shape-rendering="crispEdges"/><ellipse cx="891.2" cy="467.5" rx="679.8" ry="542.7" fill="none" stroke="#000" stroke-width="3.8" shape-rendering="crispEdges"/><ellipse cx="891.2" cy="467.5" rx="906.4" ry="723.6" fill="none" stroke="#000" stroke-width="3.8" shape-rendering="crispEdges"/><ellipse cx="891.2" cy="467.5" rx="1133.0" ry="904.5" fill="none" stroke="#000" stroke-width="3.8" shape-rendering="crispEdges"/><path d="M651.1,491.9 654.6,491.1 656.1,487.9 658.2,484.7 661.1,485.5 663.0,482.8 665.4,482.1 668.8,484.3 670.4,483.6 673.2,483.0 676.6,480.2 678.4,483.9 681.4,483.2 683.9,483.6 685.6,486.0 687.7,487.2 690.0,488.1 689.0,490.8 686.1,492.7 685.7,496.9 689.3,497.7 689.9,499.0 693.5,499.7 695.6,498.5 696.7,497.6 699.5,494.2 702.4,497.5 705.2,497.7 706.6,495.4 710.0,493.8 708.8,490.3 712.8,489.0 711.4,484.8 711.8,481.5 716.9,482.8 718.2,480.2 717.2,477.1 717.3,474.2 717.5,471.2 719.9,467.6 720.3,471.7 724.1,472.0 726.6,473.8 727.0,477.2 730.8,476.9 732.5,478.8 733.6,482.3 737.2,480.4 740.2,481.4 743.4,482.9 745.3,484.9 746.3,488.3 749.3,488.8 752.1,489.2 753.9,492.8 757.6,491.7 760.0,494.5 762.4,492.5 764.9,495.0 767.3,492.9 769.7,491.9 772.2,492.7 774.7,492.7 777.4,494.2 780.3,493.0 783.2,492.9 785.9,494.9 788.9,493.1 792.1,492.2 793.4,488.1 796.5,488.1 799.9,486.4 801.8,489.3 804.8,490.4 805.9,493.6 808.9,495.7 812.4,495.1 815.1,497.1 817.5,500.3 822.3,499.7 821.9,503.3 823.5,506.1 825.1,508.2 825.4,511.9 827.3,513.9 829.2,516.0 831.5,516.9 834.7,516.2 835.1,513.1 838.0,512.1 839.0,509.7 841.1,508.0 842.3,504.9 846.4,506.0 848.0,503.7 850.4,502.6 852.4,500.5 856.5,499.8 856.1,502.4 853.9,504.6 852.6,507.3 853.6,509.8 856.8,511.8 856.1,514.7 857.6,516.8 856.4,520.1 859.0,521.6 860.5,523.7 861.7,525.3 862.8,528.6 864.9,530.3 867.6,530.8 870.2,532.7 869.0,536.2 870.6,538.6 873.0,541.3 871.0,542.9 870.2,545.4 867.6,546.4 866.3,549.0 862.7,549.0 864.3,554.8 857.7,551.5 857.3,555.2 856.5,558.0 855.4,560.5 852.7,561.4 849.8,562.1 851.0,562.5 851.8,568.4 854.0,570.4 855.9,572.9 858.4,574.5 861.2,575.9 864.3,576.5 864.6,580.2 867.7,580.8 868.7,583.7 870.8,585.1 872.5,587.6 869.7,591.5 872.4,593.5 876.1,595.3 875.3,598.3 875.5,601.1 873.1,603.2 872.2,605.7 872.6,608.6 871.7,611.1 871.3,613.7 872.1,616.9 868.3,617.7 868.3,620.8 867.5,623.5 864.7,624.5 864.8,628.3 861.7,629.0 860.0,631.1 856.2,628.9 854.3,631.6 851.6,630.1 849.9,628.2 849.9,625.3 847.6,623.5 845.1,622.4 843.1,619.4 839.2,623.4 836.6,622.4 834.6,620.7 834.2,618.1 831.3,616.7 831.9,613.6 828.7,612.4 830.2,609.8 829.0,607.0 829.1,604.3 830.1,601.7 831.1,599.0 829.4,596.4 828.4,593.8 828.1,590.8 825.3,589.5 828.5,588.8 829.1,585.0 831.0,584.8 830.4,580.9 827.4,579.7 825.3,578.7 821.7,576.4 816.9,576.3 817.1,580.6 813.9,580.8 812.7,583.4 811.2,585.6 807.9,587.4 805.6,586.3 803.4,584.6 800.8,584.5 798.5,583.3 796.2,583.7 793.1,582.8 790.1,582.6 787.3,583.2 785.1,584.2 783.1,582.6 779.9,583.3 777.2,582.3 777.4,578.7 773.9,578.3 771.3,577.0 772.4,573.9 772.8,570.5 772.1,567.1 770.3,564.6 772.2,561.6 773.5,555.7 769.0,557.6 766.7,556.1 762.2,555.9 760.0,553.7 761.7,549.2 760.1,546.5 757.2,546.5 754.9,543.7 752.6,540.8 749.0,545.6 746.6,543.7 744.0,543.7 741.4,543.5 738.7,543.1 736.2,543.7 734.0,545.9 731.1,544.4 728.9,546.7 726.2,546.0 723.6,545.1 721.0,545.9 718.4,546.4 715.8,546.7 713.1,545.5 710.7,548.3 708.5,546.8 706.5,545.4 704.5,543.8 702.1,543.2 700.1,541.7 698.5,539.6 695.1,540.5 691.6,538.9 693.4,535.6 691.6,532.8 692.5,529.2 690.6,527.8 688.3,526.8 687.3,524.0 684.7,523.4 684.4,519.0 680.1,520.5 677.1,520.0 674.4,519.1 672.5,517.1 670.3,515.4 668.7,512.9 667.3,510.1 665.2,508.4 663.4,506.1 660.1,506.6 657.0,506.8 655.3,505.1 652.8,503.0 654.2,499.5 654.0,496.3 651.8,493.7Z" fill="#000"/><path d="M759,516 L762,517 L764,520 L767,521 L770,527 L768,529 L765,526 L762,524 L760,521 Z" fill="#fff"/><path d="M853.1,497.0 852.5,497.7 852.4,498.7 851.4,498.9 850.5,499.1 849.7,498.7 849.6,497.7 848.8,497.0 849.6,496.3 849.6,495.2 850.5,494.7 851.5,494.9 852.3,495.4 852.5,496.3Z" fill="#000"/><path d="M863.5,489.0 863.1,489.4 863.1,489.9 862.3,489.9 861.7,490.0 861.2,489.7 860.4,489.5 860.3,489.0 860.5,488.5 861.1,488.3 861.7,488.2 862.3,488.2 863.2,488.0 863.1,488.7Z" fill="#000"/><path d="M871.1,486.0 870.9,486.8 870.2,487.2 869.4,487.3 868.7,487.2 867.7,487.3 867.6,486.6 866.7,486.0 867.3,485.3 867.7,484.6 868.6,484.6 869.5,484.1 870.0,484.9 871.2,485.1Z" fill="#000"/><path d="M917.1,474.0 916.8,475.2 915.9,476.0 914.7,476.8 913.3,476.8 912.7,475.4 912.0,474.8 911.3,474.0 911.6,473.0 912.4,472.3 913.5,472.1 914.5,472.0 916.1,471.8 916.4,473.0Z" fill="#000"/><path d="M917.7,475.0 917.4,476.1 916.6,476.9 915.5,477.0 914.4,477.5 913.5,476.7 912.7,476.0 911.7,475.0 912.8,474.0 913.5,473.2 914.4,472.4 915.6,472.5 917.0,472.7 917.0,474.1Z" fill="#000"/><path d="M931.8,460.0 931.7,461.5 930.0,461.9 929.2,463.0 927.7,463.5 926.4,462.6 925.3,461.5 925.0,460.0 925.9,458.7 926.5,457.5 927.9,457.4 929.2,456.8 930.7,457.3 931.7,458.5Z" fill="#000"/><path d="M952.2,458.5 952.1,459.6 951.3,459.9 950.8,460.2 950.2,460.5 949.8,459.8 949.5,459.2 948.8,458.5 949.5,457.8 949.6,456.9 950.2,456.6 950.8,456.4 951.4,456.9 952.1,457.4Z" fill="#000"/><path d="M958.7,438.3 959.3,439.3 958.7,440.4 956.6,439.9 955.2,440.3 954.0,439.9 952.4,439.4 952.0,438.3 952.5,437.2 953.5,436.4 955.4,436.7 956.8,436.0 958.5,436.3 958.8,437.5Z" fill="#000"/><path d="M976.3,433.5 976.5,434.4 975.7,434.8 975.2,435.5 974.2,435.6 973.4,435.1 973.1,434.3 973.0,433.5 973.0,432.7 973.5,431.9 974.3,431.6 975.1,431.9 975.7,432.2 976.7,432.5Z" fill="#000"/><path d="M993.0,431.0 993.2,431.7 992.7,432.4 991.6,432.7 990.6,432.3 989.5,432.3 988.5,431.8 988.9,431.0 988.9,430.3 989.2,429.5 990.3,429.1 991.5,429.5 992.2,430.0 993.0,430.4Z" fill="#000"/><path d="M1017.0,382.0 1016.3,384.3 1014.5,385.5 1012.9,386.6 1011.0,386.9 1008.7,386.6 1007.1,384.7 1007.2,382.0 1006.6,379.1 1008.0,376.4 1010.9,376.8 1013.3,375.4 1015.2,377.5 1016.0,379.8Z" fill="#000"/><path d="M1033.2,412.5 1030.0,413.9 1029.5,415.6 1027.3,416.5 1024.6,416.8 1021.9,416.2 1022.0,413.9 1020.9,412.5 1019.9,410.4 1022.7,409.6 1024.6,408.1 1027.0,409.5 1029.8,409.1 1030.8,410.9Z" fill="#000"/><path d="M1046.7,411.0 1046.6,411.6 1046.1,412.1 1045.4,412.3 1044.6,412.5 1044.0,412.1 1043.4,411.6 1043.5,411.0 1043.5,410.4 1044.1,410.1 1044.6,409.5 1045.3,410.0 1046.2,409.8 1046.2,410.5Z" fill="#000"/><path d="M1068.8,396.0 1068.6,399.9 1065.5,401.0 1063.6,402.5 1061.5,401.9 1058.5,402.6 1056.7,399.7 1056.2,396.0 1058.1,393.1 1059.2,390.5 1061.4,389.4 1063.9,387.6 1066.2,389.8 1066.8,393.2Z" fill="#000"/><path d="M1083.4,407.0 1083.5,409.7 1081.8,410.0 1081.2,412.8 1080.0,411.2 1079.1,410.3 1077.6,409.6 1077.5,407.0 1078.3,405.0 1078.5,402.5 1079.9,402.2 1081.1,402.3 1081.8,404.0 1083.3,404.5Z" fill="#000"/><path d="M1098.0,390.0 1097.4,390.8 1097.1,391.6 1096.3,391.7 1095.7,391.7 1095.1,391.4 1094.7,390.7 1094.1,390.0 1094.2,389.0 1095.0,388.5 1095.6,387.9 1096.4,387.9 1097.1,388.4 1097.3,389.3Z" fill="#000"/><path d="M1144.7,403.5 1141.6,405.3 1140.1,406.6 1138.6,409.2 1135.8,407.7 1133.7,406.8 1132.1,405.4 1131.5,403.5 1130.9,401.2 1132.8,399.2 1135.6,398.5 1138.7,397.4 1141.9,398.6 1143.3,401.1Z" fill="#000"/><path d="M1032.3,392.0 1031.9,392.2 1032.0,392.5 1031.3,392.5 1030.7,392.5 1030.1,392.5 1029.7,392.3 1030.0,392.0 1029.7,391.7 1030.1,391.5 1030.7,391.5 1031.3,391.5 1031.9,391.5 1032.4,391.7Z" fill="#000"/><path d="M1113.4,400.0 1113.3,400.3 1112.8,400.5 1112.3,400.7 1111.7,400.7 1111.3,400.4 1110.8,400.3 1110.6,400.0 1110.9,399.7 1111.3,399.6 1111.7,399.3 1112.3,399.3 1112.8,399.5 1113.4,399.7Z" fill="#000"/><path d="M879.8,455.2 881.3,456.8 883.2,458.2 884.3,460.5 884.1,462.8 883.8,465.1 884.6,466.3 886.5,465.4 888.9,465.1 890.8,463.6 890.0,460.8 891.4,459.3 892.5,457.6 894.0,455.5 896.1,457.1 898.3,458.3 901.4,458.6 899.2,460.2 899.1,462.5 899.2,465.1 897.6,467.0 896.1,469.0 895.0,470.5 896.8,471.5 897.4,473.9 899.0,475.1 900.6,476.9 902.7,478.3 904.9,480.2 903.8,482.8 905.9,484.5 906.7,486.6 905.2,488.8 905.7,491.0 905.6,493.1 905.9,495.2 905.9,497.3 905.2,500.3 902.3,499.1 900.7,501.5 898.3,501.8 895.5,500.9 894.5,504.1 892.3,505.0 889.9,505.4 887.4,507.2 887.8,504.8 886.1,502.6 886.6,500.7 885.5,499.0 884.6,497.1 883.7,495.1 882.2,493.4 880.4,492.2 878.2,492.6 875.8,492.8 874.5,495.0 871.9,494.7 870.3,496.5 868.1,496.7 865.8,496.8 864.0,498.2 861.9,498.8 860.7,500.0 859.9,497.6 859.8,495.3 859.6,493.0 859.9,490.5 862.2,488.8 864.7,487.5 867.6,486.4 868.3,483.9 868.5,481.0 869.9,479.2 872.7,479.9 874.1,478.0 875.8,476.6 877.6,475.4 879.3,475.3 877.9,473.3 876.5,471.3 875.5,469.5 876.2,467.2 876.4,465.0 876.3,462.7 878.2,461.3 879.1,459.4 877.9,456.7Z" fill="#000"/><path d="M886.6,472.8l1.3,0.0M891.9,490.5l1.8,-1.1M891.9,495.5l1.8,0.0M874.8,482.3l-0.9,0.0M883.9,492.3l1.1,0.0M882.8,481.2l-1.9,-1.0M882.9,468.6l-1.9,-1.3M885.6,472.2l-1.0,-1.5M864.9,493.7l1.3,0.0M887.1,473.8l1.6,-0.8M892.2,501.4l1.8,-1.1M890.8,476.2l-1.9,-1.2M891.8,464.0l1.4,1.0M892.2,470.7l1.1,0.0M884.0,492.7l1.3,-1.2M893.2,480.6l-1.8,-1.0M884.2,474.3l-1.5,0.5M875.0,484.4l0.9,0.0M896.7,491.5l-1.1,-0.6M889.8,486.8l-1.5,0.0M892.0,498.3l1.4,1.2M888.9,468.3l-1.5,0.0M889.7,475.4l-1.2,0.0M898.6,490.8l1.2,0.0M891.6,464.9l1.1,1.5M873.1,487.0l-1.7,0.9M893.7,489.0l-1.9,0.0M897.7,482.1l-1.6,0.6M876.5,486.5l0.9,-1.4M885.0,487.4l-1.9,0.7M900.1,480.3l-1.3,-0.7M882.1,490.5l-1.7,-1.3M889.3,486.9l-1.7,0.0M888.0,482.8l-1.3,0.9M899.4,488.2l1.1,-0.9M891.3,493.5l1.1,0.0M876.7,480.8l1.3,0.6M889.9,484.3l1.0,0.8M869.0,492.8l-1.0,0.0 M889.5,469.5 l3,2.5 M886,481.5 l3,2.5" stroke="#fff" stroke-width="1.2" fill="none"/><path d="M831.2,615.0 834.2,618.0 835.6,619.4 835.7,618.5 834.8,614.8 835.1,614.8 832.3,616.8 834.1,616.5 832.5,617.2 833.2,615.7 832.8,613.6 830.5,611.8 830.6,611.5 828.7,612.2 829.2,613.7 828.6,614.0 M802.7,584.6 804.7,584.6 804.3,585.6 806.0,583.4 805.3,585.6 801.8,582.4 805.0,585.8 802.5,587.6 802.6,589.0 802.6,589.1 801.6,587.2 804.8,589.6 M845.6,624.2 846.6,625.2 846.4,624.0 846.2,623.0 847.1,623.2 848.8,625.4 847.2,626.2 847.8,625.8 847.4,622.4 848.0,623.8 846.5,623.9 846.3,621.9 M758.8,546.1 760.8,544.1 759.4,543.5 758.2,544.0 755.3,541.4 756.0,540.3 754.6,543.5 754.4,545.0 756.3,544.2 758.8,542.6 758.8,545.3 761.8,542.4 M729.5,477.7 726.5,477.7 725.1,477.7 724.0,475.7 726.1,477.1 724.8,477.2 725.8,474.3 724.5,475.0 723.5,473.5 725.7,475.4 726.5,473.8 729.1,472.6 727.2,473.6 724.7,471.4 M853.9,559.6 851.9,557.6 852.3,556.0 852.6,555.8 854.8,554.5 856.6,555.6 853.1,559.4 852.2,560.4 854.6,558.3 854.4,561.5 854.3,562.2 852.2,561.7 853.5,562.3 M854.1,503.4 854.1,506.4 855.1,506.8 853.9,507.1 857.0,509.4 854.4,508.2 852.3,507.2 850.7,506.5 850.4,505.9 851.1,506.4 850.7,506.8 851.4,504.1 854.0,502.0 852.0,504.3 854.4,502.1 854.4,504.4 851.3,501.2 M716.4,481.8 714.4,483.8 716.8,483.4 714.7,483.1 718.0,482.9 718.7,481.7 716.2,481.7 715.3,482.7 715.5,481.5 M826.6,591.5 826.6,589.5 823.6,592.9 826.2,594.7 828.3,594.0 829.0,594.5 829.5,594.9 828.9,595.3 827.5,593.5 826.3,592.1 827.4,591.0 827.2,590.1 828.1,589.4 827.8,586.8 M761.8,549.9 760.8,548.9 763.0,551.1 762.8,552.9 760.6,550.3 758.8,548.2 762.4,545.5 760.3,546.4 760.6,545.1 761.9,546.1 761.8,548.8 762.8,550.0 M860.5,525.0 862.5,523.0 862.1,521.4 861.8,524.1 861.5,526.3 861.3,528.0 861.2,530.4 864.0,532.3 864.3,530.9 863.6,530.7 862.9,528.6 862.5,528.8 864.1,526.1 861.3,525.9 860.2,524.7 861.2,525.7 M827.3,512.6 826.3,511.6 829.5,511.8 826.1,515.0 825.3,513.5 827.7,515.3 829.6,516.8 826.2,515.9 828.4,517.3 826.2,516.3 M716.2,482.0 714.2,484.0 712.6,483.6 715.4,483.2 714.5,482.0 717.9,485.0 715.6,484.4 716.7,483.9 716.6,485.5 713.5,487.8 M870.7,584.6 868.7,584.6 869.1,583.6 868.5,584.8 870.9,582.7 873.9,586.1 871.2,583.8 869.1,582.0 868.5,582.5 868.9,585.9 868.3,585.6 868.8,586.4 869.2,584.1 871.5,584.2 870.3,584.3 M853.4,507.4 851.4,509.4 849.8,509.0 847.5,511.6 848.7,511.8 849.6,512.9 848.4,509.8 846.4,512.3 849.8,511.3 851.5,509.5 M692.1,529.6 692.1,527.6 694.1,530.0 690.7,529.9 689.9,530.9 692.4,528.6 689.3,528.8 689.8,531.0 693.3,533.7 693.0,530.9 692.8,533.6 692.7,529.8 692.6,526.8 693.5,527.3 M718.2,478.6 716.2,480.6 717.6,479.2 719.7,477.1 718.4,476.4 717.3,475.8 717.5,473.4 714.6,474.4 716.3,476.3 719.7,473.7 719.4,475.7 721.1,476.3 721.6,475.7 721.9,475.3 721.1,479.0 718.5,478.9 M688.6,491.3 690.6,493.3 691.2,492.9 690.7,490.6 689.3,489.7 689.2,493.0 688.1,493.7 687.2,494.2 690.5,490.6 690.1,492.8 689.8,489.5 M865.3,625.7 865.3,627.7 862.3,624.3 860.9,624.6 863.8,622.8 862.1,625.4 860.7,623.4 859.6,625.9 857.8,625.9 M750.9,489.7 753.9,486.7 751.3,489.3 753.2,489.3 754.7,489.4 751.9,491.5 753.7,489.1 752.2,489.2 749.9,489.3 750.1,486.4 749.2,488.0 748.6,487.4 749.0,484.8 751.4,487.8 751.3,487.2 754.2,484.7 750.5,488.7 M808.2,493.7 807.2,493.7 804.4,493.7 805.2,494.7 804.8,493.5 806.5,494.6 807.8,495.4 808.9,494.1 806.7,494.0 804.0,491.0 803.9,492.5 807.7,489.8 807.8,489.6 808.9,491.4 806.8,489.9 M872.7,589.3 871.7,588.3 871.9,586.5 873.0,587.1 874.9,585.6 873.5,585.3 873.3,589.1 873.2,586.2 873.1,585.8 874.0,586.5 875.7,589.1 M850.0,563.5 852.0,561.5 850.6,562.9 850.5,564.0 851.4,564.9 851.1,562.7 850.9,563.8 852.7,565.8 855.1,562.3 851.1,562.6 850.9,560.8 M822.9,506.3 822.9,507.3 821.9,506.1 819.1,503.1 816.9,503.8 819.1,504.3 822.8,507.7 824.8,509.4 823.5,508.8 824.3,509.3 824.1,507.7 826.8,510.4 827.0,509.6 M799.2,487.4 796.2,484.4 795.8,486.0 795.5,485.3 796.2,486.7 798.8,484.9 797.9,484.4 801.2,488.0 800.8,490.9 M807.7,493.1 807.7,491.1 808.7,492.5 810.5,494.6 809.9,491.3 807.5,489.7 808.5,490.4 811.4,490.9 809.6,490.4 810.3,489.9 812.7,490.6 809.7,489.1 807.3,487.9 808.4,488.9 807.3,489.8 M651.4,492.6 651.4,493.6 653.4,495.4 655.0,494.9 657.3,497.4 655.1,495.4 654.3,496.9 654.8,497.0 654.1,498.1 652.5,496.0 654.3,493.4 651.7,491.2 M852.8,500.5 852.8,502.5 852.8,503.1 849.8,499.6 851.4,499.8 851.7,497.9 851.9,499.5 849.1,502.7 851.8,504.3 M785.4,584.9 785.4,582.9 786.4,584.3 786.2,582.4 785.1,581.9 785.1,580.5 787.2,583.3 786.8,582.6 786.6,585.1 M705.0,496.0 703.0,494.0 703.4,492.4 702.8,494.1 703.2,492.5 704.6,492.2 704.7,496.0 704.7,498.0 704.8,495.6 704.8,492.7 702.9,491.3 M762.5,551.1 761.5,550.1 759.7,552.3 759.2,552.0 761.9,553.8 765.0,556.3 767.5,555.2 766.5,556.4 762.7,558.3 762.7,554.9 760.6,554.1 M698.4,496.0 698.4,497.0 697.4,496.8 699.6,494.6 698.4,493.9 696.4,496.3 699.8,499.3 701.5,498.6 697.9,501.1 698.0,498.1 699.1,497.7 699.0,500.3 698.9,500.5 698.8,497.6 M814.1,581.6 814.1,584.6 816.1,586.0 813.7,583.1 813.8,583.8 816.9,586.3 814.3,583.4 814.3,585.0 815.2,583.3 813.0,583.0 815.2,580.7 815.0,579.9 815.8,580.2 812.5,577.5 814.8,578.3 813.7,578.9 814.8,578.5 M828.8,606.5 826.8,606.5 825.2,606.5 824.9,605.5 823.7,603.7 826.7,602.3 825.1,601.1 825.8,601.2 825.4,603.3 825.1,602.9 826.8,602.7 825.2,603.4 824.9,605.0 M758.5,545.9 759.5,546.9 758.3,547.7 759.3,546.4 757.2,548.3 759.4,547.8 756.2,544.4 758.7,546.7 760.6,544.6 759.2,544.9 761.1,545.1 762.6,543.2 763.7,545.8 762.7,547.8 758.8,550.4 760.8,547.5 763.3,547.2 M853.3,500.3 850.3,503.3 849.9,503.7 851.6,504.0 849.9,501.3 848.6,503.1 850.5,502.5 853.1,504.1 851.1,501.3 M760.1,546.9 760.1,544.9 760.1,543.3 760.1,543.0 763.1,543.8 761.5,545.4 761.2,542.7 758.0,540.5 755.4,541.8 758.4,540.8 759.7,541.0 M674.0,482.6 673.0,483.6 673.2,482.4 673.4,484.5 670.5,481.1 673.2,483.4 671.3,485.2 674.9,481.7 673.7,480.9 673.8,479.2 674.8,478.9 674.6,480.7 M711.6,487.7 709.6,487.7 709.0,486.7 709.5,489.9 707.9,491.4 710.7,490.7 712.9,492.1 710.6,493.2 712.8,494.1 713.6,491.8 714.2,490.0 713.7,492.5 712.2,492.5 M859.8,553.9 859.8,551.9 860.8,553.3 860.6,554.4 857.4,551.3 857.9,553.8 860.3,555.9 862.2,557.5 860.7,557.8 861.5,557.0 860.2,556.4 M826.3,511.6 824.3,511.6 825.7,510.6 824.8,509.8 826.1,509.1 828.1,511.6 828.7,512.6 825.2,515.4 824.4,515.6 823.8,515.8 825.3,516.0 824.5,514.1 821.8,513.6 824.7,515.2 824.0,515.5 824.5,516.7 826.8,515.6 M651.4,492.7 649.4,494.7 650.8,493.3 648.9,493.2 649.4,491.1 652.8,494.4 653.5,494.1 652.1,493.8 653.0,494.6 653.7,494.2 655.2,491.9 654.5,493.1 651.8,495.0 M688.6,491.4 685.6,494.4 687.2,493.8 689.5,495.3 689.3,492.5 689.2,490.3 690.0,490.5 690.8,490.7 689.3,490.8 691.2,492.9 693.7,492.6 693.6,493.4 691.6,492.0 691.0,490.9 691.5,490.0 691.9,491.2 689.3,489.3 M874.8,595.8 872.8,593.8 871.2,596.2 872.9,596.1 873.3,597.0 875.6,594.8 878.5,592.0 879.7,594.7 876.7,592.9 878.4,595.5 M712.0,486.8 710.0,486.8 711.4,485.8 711.5,487.0 712.6,486.9 713.5,487.9 713.2,489.7 711.9,489.1 711.9,490.6 713.0,488.9 711.8,489.4 713.8,488.9 715.4,488.5 712.7,488.1 M674.9,517.4 675.9,517.4 676.7,516.4 673.3,516.6 675.6,514.8 674.5,514.3 672.6,513.0 673.0,515.9 671.4,516.2 673.1,515.4 676.5,512.8 677.1,513.8 M825.6,590.0 825.6,587.0 827.6,585.6 824.2,589.5 823.5,589.6 821.9,587.7 820.6,586.1 818.6,589.9 820.0,587.9 M666.7,511.7 669.7,511.7 667.1,509.7 670.0,513.1 672.3,512.8 673.2,512.6 671.9,515.4 668.9,512.6 671.4,515.5 671.5,513.7 667.5,510.3 666.4,511.6 666.4,513.6 665.5,513.2 665.7,513.9 664.9,513.5 667.3,515.1 M708.8,494.1 710.8,492.1 712.4,490.5 711.7,488.2 713.1,489.4 712.3,488.4 712.6,490.5 710.8,491.2 708.4,489.8 M855.9,515.8 858.9,515.8 857.3,515.8 858.0,514.8 855.6,515.0 857.7,515.2 857.3,513.3 855.0,513.8 855.2,517.2 854.3,517.9 852.7,515.5 852.3,515.6 853.0,512.6 854.6,512.3 852.9,515.0 855.5,515.1 M871.9,613.6 871.9,612.6 871.9,613.8 871.9,616.8 870.9,615.1 871.1,616.8 869.3,616.2 872.8,612.7 874.6,610.9 874.1,610.4 872.6,611.0 874.5,609.6 873.0,611.4 M786.2,494.4 784.2,496.4 782.6,498.0 782.3,496.3 782.1,495.9 785.9,492.6 785.0,494.0 782.2,491.1 781.0,491.7 780.1,492.3 779.3,492.7 780.7,491.0 780.8,492.7 M812.3,582.9 810.3,582.9 808.7,584.9 812.4,587.5 810.4,584.6 811.8,585.3 811.9,583.8 810.0,585.7 810.5,588.1 812.8,589.1 810.7,589.9 812.1,587.5 809.1,586.6 807.8,585.8 808.7,584.3 810.4,583.0 M828.5,609.3 829.5,609.3 828.3,608.3 829.4,607.5 826.2,604.9 828.7,603.7 829.6,604.8 831.4,605.7 829.8,607.4 828.6,607.8 826.6,608.1 826.0,609.3 826.5,607.3 827.9,606.7 M702.2,544.1 703.2,544.1 705.0,546.1 702.4,545.7 701.4,544.4 703.6,544.3 704.3,543.3 701.9,543.4 698.9,546.6 698.6,546.1 M871.2,585.0 868.2,585.0 868.8,584.0 866.3,584.2 869.3,586.4 870.6,585.1 870.7,582.1 868.8,584.6 870.3,584.7 869.5,583.8 M653.8,501.8 650.8,501.8 651.4,502.8 651.8,504.6 650.2,504.0 651.9,503.6 652.3,504.2 651.6,504.7 655.0,507.1 656.8,506.0 654.2,505.2 M870.3,584.2 872.3,584.2 869.9,586.2 869.0,585.8 872.3,588.5 869.9,587.6 872.0,584.9 871.6,581.8 871.4,585.3 869.2,585.1 871.4,586.9 872.2,587.4 872.8,585.7 870.3,587.4 868.3,588.8 866.7,589.9 866.4,587.7 M692.8,499.0 693.8,499.0 690.6,502.0 693.0,499.4 693.0,498.4 693.9,497.5 695.7,495.8 694.1,495.4 692.8,495.2 694.8,493.9 693.4,495.0 694.3,494.8 697.0,492.6 698.1,491.9 697.1,490.3 698.2,492.1 697.1,495.5 M756.0,492.0 757.0,492.0 756.8,490.0 758.6,492.4 760.1,490.3 757.3,490.7 756.0,490.9 755.0,492.1 757.2,494.1 759.0,493.7 758.4,494.4 759.9,495.9 761.1,495.1 762.1,494.5 M718.7,473.7 721.7,473.7 721.1,470.7 722.6,471.3 719.8,473.8 718.6,473.7 716.6,473.7 717.0,475.7 715.3,473.3 714.0,473.4 715.9,472.5 714.5,472.7 714.3,472.9 713.2,475.1 M653.7,501.7 651.7,501.7 655.1,498.7 654.9,500.3 654.6,502.6 652.5,500.4 654.7,500.6 653.5,501.8 651.6,499.8 650.0,502.2 649.7,501.1 650.5,504.2 M870.1,618.2 870.1,620.2 867.1,622.8 865.7,623.9 864.5,620.8 865.7,622.3 864.5,623.4 863.6,622.4 864.9,619.6 868.0,617.3 870.4,617.5 868.3,617.6 867.7,618.7 868.1,616.6 M710.5,490.3 708.5,488.3 707.9,487.7 708.4,487.2 706.8,487.8 707.5,489.3 711.1,486.5 711.0,490.3 708.9,488.3 708.2,487.7 706.7,486.2 708.4,488.0 708.8,487.5 709.2,487.0 710.4,486.7 M805.3,491.3 807.3,489.3 807.9,488.7 810.4,492.2 810.4,493.0 809.4,490.7 809.6,490.8 810.7,492.9 811.7,494.6 810.4,495.9 808.4,494.0 M867.6,547.0 867.6,549.0 867.6,551.6 867.6,553.6 864.6,552.3 865.2,554.2 867.7,554.8 869.7,553.2 872.3,549.0 871.3,546.6 868.6,544.6 869.4,544.1 872.0,547.7 M850.3,626.2 847.3,626.2 845.9,626.2 847.8,626.2 847.3,626.2 849.9,624.2 851.0,623.6 851.8,624.1 851.5,625.5 848.3,628.6 M791.4,490.9 789.4,490.9 789.8,491.9 793.1,488.7 791.8,488.1 789.7,488.7 790.0,491.1 790.3,490.1 789.5,489.2 788.9,489.5 791.4,491.8 792.4,490.6 793.2,491.7 792.8,493.5 795.6,493.0 791.7,489.6 792.7,488.8 M724.4,473.2 725.4,473.2 723.2,473.2 724.4,474.2 723.4,475.0 723.6,475.6 722.7,475.1 724.1,473.7 724.1,471.6 724.2,469.9 726.2,468.6 M854.4,502.1 854.4,500.1 857.4,500.5 859.8,497.9 861.7,495.7 862.3,495.0 860.7,494.4 859.4,497.0 858.4,499.0 M869.9,535.3 870.9,534.3 870.7,531.5 873.6,535.2 875.8,538.2 875.7,537.6 875.5,538.2 872.4,537.6 872.9,536.1 873.3,535.9 871.6,535.8 871.3,533.7 M847.9,502.8 847.9,504.8 848.9,503.4 846.7,503.3 847.0,505.2 847.2,502.7 847.3,500.8 850.4,504.2 847.9,503.9 848.9,503.7 847.7,502.5 846.8,503.6 846.0,504.4 846.4,505.1 846.7,503.7 845.9,502.5 848.3,500.6 M785.0,494.6 786.0,493.6 785.8,492.8 785.7,494.2 783.5,492.3 784.8,491.7 785.9,493.3 784.7,493.6 785.8,492.8 783.6,493.2 784.9,492.4 M754.0,491.2 751.0,488.2 752.6,489.8 751.9,490.1 753.3,490.3 756.4,493.5 755.9,494.0 758.5,490.5 755.6,490.6 752.3,487.7 750.6,486.4 749.3,485.4 751.2,486.5 751.8,489.5 754.2,489.8 751.2,493.1 753.7,492.7 M799.7,487.6 799.7,486.6 800.7,486.8 798.5,489.0 796.7,488.7 798.3,488.5 799.6,487.3 799.6,489.4 801.6,489.0 804.2,491.8 805.3,488.9 807.2,491.7 806.7,489.9 806.3,488.4 802.9,490.3 M666.5,511.6 668.5,509.6 668.1,507.0 667.8,509.9 668.6,511.2 669.1,510.3 667.6,511.5 669.4,509.5 667.8,510.0 669.6,508.3 667.0,508.9 665.9,510.5 664.0,508.7 M862.9,551.2 863.9,551.2 865.7,549.2 864.1,548.6 863.9,550.1 866.7,553.3 864.9,551.9 862.5,551.7 863.6,551.6 862.4,552.5 863.5,553.3 861.4,552.9 864.7,549.5 865.3,549.8 862.8,548.1 862.8,550.7 M871.9,613.5 872.9,612.5 872.7,610.7 873.6,612.3 873.2,610.5 874.0,612.1 871.6,612.4 872.6,613.6 873.5,613.6 875.2,611.6 873.5,613.0 873.2,614.1 874.9,616.0 872.3,617.5 873.3,617.7 876.0,619.9 875.2,619.6 M778.9,582.0 781.9,582.0 783.3,584.0 781.4,582.6 778.9,584.5 779.9,584.0 779.7,585.6 779.5,583.9 778.4,583.5 776.5,585.2 775.0,582.6 775.8,583.5 777.4,584.2 779.7,581.8 780.5,581.8 M856.9,572.3 855.9,571.3 857.1,570.5 858.1,571.9 856.8,571.0 857.8,571.2 859.6,571.4 859.1,569.6 858.7,567.2 859.3,567.2 856.8,570.2 855.8,571.6 857.0,570.8 M845.3,624.1 844.3,625.1 843.5,625.9 842.8,624.5 841.3,624.4 840.1,626.4 838.1,628.9 842.6,630.9 842.1,630.6 841.7,629.3 842.4,629.2 843.0,629.2 846.5,631.2 848.2,627.7 848.6,627.0 846.9,625.4 845.6,626.2 M763.6,553.1 766.6,553.1 765.0,553.1 766.7,555.1 765.1,553.7 762.8,555.5 763.0,553.1 763.1,550.1 762.2,551.7 759.5,551.9 760.3,553.2 764.0,553.1 761.9,551.1 M674.7,482.8 671.7,479.8 671.3,480.4 672.0,478.9 673.5,478.6 675.8,477.5 676.6,478.5 674.2,481.4 674.3,479.7 675.4,480.3 677.2,482.8 676.7,480.8 675.3,482.2 673.2,480.3 674.5,479.8 M675.0,482.8 673.0,482.8 670.4,479.8 669.3,478.4 669.4,480.3 670.6,478.8 671.4,476.6 670.2,475.9 671.1,475.3 671.9,473.8 669.5,475.6 673.6,474.0 672.9,476.8 M804.1,584.9 805.1,585.9 803.9,586.7 801.9,588.4 802.3,585.7 804.7,585.5 805.6,585.4 804.3,586.3 806.2,584.0 803.8,582.2 806.8,585.8 803.3,588.6 803.4,588.9 803.6,591.1 806.7,586.8 M673.6,482.5 671.6,480.5 672.0,482.9 670.3,480.9 670.0,482.2 667.7,482.3 670.9,482.3 668.4,479.4 666.5,477.0 669.9,478.1 672.6,477.0 673.8,478.1 675.8,479.0 675.3,481.7 M850.4,501.7 850.4,503.7 853.4,503.3 854.8,500.9 852.9,502.1 855.4,505.0 854.4,503.3 853.6,504.0 852.0,503.5 852.7,503.2 853.2,503.9 851.7,502.4 853.4,502.3 M864.4,626.6 866.4,624.6 866.0,623.0 866.7,622.7 863.2,620.5 866.5,624.7 867.1,624.1 866.5,621.6 867.1,621.6 868.6,620.6 866.7,622.8 866.3,626.5 865.9,628.5 868.6,625.2 M852.6,630.7 852.6,628.7 853.6,628.1 853.4,626.6 854.2,627.4 854.9,628.0 855.4,627.6 856.8,626.2 855.0,628.1 852.5,628.6 855.5,629.0 854.9,632.3 855.5,633.0 854.9,634.5 M693.7,498.3 693.7,495.3 695.7,495.9 695.3,494.4 695.9,495.2 697.5,497.8 697.7,498.9 698.9,498.8 699.9,500.7 698.6,502.2 697.6,502.5 696.8,502.6 693.2,498.8 M826.5,511.8 826.5,509.8 824.5,512.2 826.9,514.1 823.8,510.6 824.3,508.8 826.7,509.4 828.7,511.9 829.2,511.9 826.7,509.8 826.6,508.2 824.6,506.9 824.0,506.9 821.5,510.9 822.5,508.1 823.3,507.8 M745.0,485.3 742.0,488.3 743.6,488.7 746.9,491.0 747.5,488.8 746.0,488.1 745.8,489.5 743.6,488.7 740.9,491.0 744.7,489.9 744.8,489.9 743.8,488.0 743.1,486.4 740.4,483.2 M853.4,632.1 854.4,632.1 854.2,629.1 853.0,629.7 855.1,632.2 854.7,635.2 853.5,634.5 854.4,635.0 854.2,633.5 M700.6,496.0 700.6,495.0 700.6,497.2 702.6,495.0 702.2,497.2 698.9,496.9 700.2,496.7 702.3,498.6 703.9,500.1 703.3,501.3 701.7,499.2 M858.8,521.6 858.8,520.6 856.8,520.8 857.2,522.0 855.5,523.9 854.2,523.4 857.1,521.1 858.4,521.2 856.5,523.3 856.0,523.9 857.5,524.5 856.8,523.9 860.2,520.4 M829.2,602.2 829.2,605.2 829.2,605.6 831.2,604.9 830.8,602.3 830.4,600.3 831.2,600.7 831.8,601.0 831.3,599.2 829.8,598.8 826.7,602.5 826.2,603.4 827.8,602.2 829.1,601.2 829.1,603.4 M804.2,490.5 804.2,488.5 804.2,489.9 805.2,490.1 808.0,487.2 810.2,487.8 808.0,488.4 808.2,489.8 807.4,488.0 M746.7,486.5 746.7,487.5 746.7,490.3 744.7,491.6 745.1,492.6 743.4,491.4 746.1,490.4 747.2,490.6 748.1,489.8 748.8,488.1 M786.0,584.7 789.0,587.7 789.4,588.1 788.7,589.5 789.1,587.5 790.5,587.0 791.6,588.5 791.5,588.8 789.4,588.0 786.7,589.3 787.5,589.4 785.2,588.5 788.4,584.7 788.9,585.7 786.3,583.5 M787.3,493.7 786.3,493.7 788.5,493.7 789.2,494.7 791.8,491.5 789.9,492.9 791.4,495.1 792.6,494.8 791.5,496.6 790.7,493.0 791.0,494.1 787.3,497.0 788.3,495.4 787.1,495.0 789.1,494.8 790.7,496.6 M713.7,547.2 712.7,548.2 711.9,547.0 710.2,545.0 708.9,547.5 712.9,544.4 712.0,546.0 714.4,544.2 714.2,545.8 714.1,549.1 M804.7,490.9 803.7,491.9 803.9,488.7 805.1,488.1 806.0,487.7 806.7,488.3 804.3,486.8 807.4,490.7 804.9,488.7 803.8,489.1 806.0,489.5 805.8,488.8 808.5,489.2 807.8,490.5 807.2,493.6 M852.9,631.2 850.9,631.2 853.3,629.2 853.2,628.6 855.1,627.2 852.7,626.0 850.7,629.0 851.1,628.5 849.5,627.0 852.2,629.9 852.3,633.1 853.4,633.8 853.3,635.3 854.2,633.5 M852.8,568.7 850.8,570.7 849.2,572.3 847.9,573.6 849.9,571.6 849.4,571.0 847.1,573.5 847.2,572.6 847.3,570.8 847.4,571.4 848.5,569.8 847.3,567.6 850.4,569.8 849.9,570.6 851.5,570.2 851.7,571.9 851.9,572.3 M800.4,488.1 800.4,489.1 802.4,486.9 802.0,490.1 803.7,489.7 805.0,489.4 804.1,491.1 802.3,490.5 803.9,490.0 801.2,487.7 M846.1,504.1 844.1,502.1 846.5,504.5 845.4,505.4 843.5,505.1 844.0,506.9 844.4,508.4 846.8,507.5 849.6,506.8 848.9,505.3 849.4,506.0 M809.7,495.6 809.7,498.6 810.7,499.0 812.5,496.3 811.9,494.2 810.5,494.5 809.3,494.7 809.4,495.9 807.4,497.8 805.9,495.4 806.7,493.4 806.3,493.8 806.9,491.2 807.5,491.1 M723.9,472.8 721.9,474.8 722.3,472.4 720.6,474.4 719.3,474.1 722.2,471.8 725.5,469.0 726.2,470.8 727.8,473.2 729.0,473.1 726.0,475.0 724.6,474.6 727.4,477.2 725.7,477.3 725.4,479.4 722.1,478.1 724.4,479.0 M854.8,500.2 856.8,498.2 856.4,496.6 854.1,499.3 856.3,501.5 857.0,501.3 858.6,499.0 857.8,498.3 855.2,498.7 854.1,499.0 M661.8,508.2 658.8,505.2 657.4,503.8 659.3,503.7 657.8,506.6 660.6,504.9 660.8,507.6 660.0,507.7 661.4,506.8 661.4,510.1 658.5,509.7 658.2,509.4 655.9,512.2 657.1,513.4 661.0,509.3 663.2,511.1 M851.0,497.0 849.0,499.0 852.2,501.8 852.1,503.4 851.0,502.8 854.0,502.3 851.7,499.8 851.7,497.6 851.6,496.5 848.5,499.6 848.8,497.3 848.0,496.3 851.2,499.4 851.2,496.2 849.2,496.2 847.4,494.3 846.7,493.5 849.1,493.9 848.2,494.1 846.5,492.4 848.9,492.8 848.1,493.2 847.3,492.5 847.7,490.9 848.0,488.5 847.2,490.2 845.6,490.8 846.0,489.4 848.5,488.0 848.7,487.8 851.9,491.7 850.8,491.1 850.8,493.7 853.9,490.9 853.6,494.5 854.4,493.7 855.1,493.0 853.7,493.4 851.5,493.7 854.4,494.0 852.1,492.2 853.0,493.7 850.8,494.0 852.9,492.2 854.7,492.7 852.4,493.0 853.2,492.4 855.0,494.8 855.7,494.0 856.3,495.3 858.8,495.4 M862.0,489.0 862.0,486.0 864.0,488.6 864.8,488.7 863.6,488.7 860.4,491.8 863.6,491.2 862.4,491.8 862.4,489.2 862.4,488.2 861.3,489.3 861.4,488.3 859.4,490.4 858.7,489.1 860.0,489.1 858.1,491.1 858.5,493.7 860.8,490.7 858.9,488.4 859.2,490.5 861.4,488.2 860.5,487.4 857.6,487.7 856.0,486.0 857.5,485.6 854.9,486.3 855.6,487.8 858.1,486.0 858.5,489.6 855.8,489.5 854.3,489.4 855.0,491.3 855.6,488.9 854.2,490.9 854.9,491.5 855.5,489.0 856.1,487.0 856.6,484.4 860.1,485.3 859.3,487.1 857.5,487.4 M869.0,486.0 867.0,486.0 870.2,489.0 870.1,490.6 868.0,490.0 870.1,487.5 871.0,486.3 872.8,486.3 875.5,489.2 874.9,485.8 874.4,488.8 874.9,489.5 874.4,486.0 870.9,489.0 870.7,485.6 870.6,483.7 871.4,483.0 869.2,485.4 867.2,483.5 868.4,484.8 870.4,486.9 870.3,484.8 872.2,485.0 872.9,485.1 872.5,486.2 873.2,485.2 870.9,487.3 873.7,487.1 873.3,485.0 874.9,483.1 875.4,483.5 873.8,484.8 874.4,485.0 874.9,485.1 876.4,485.2 873.7,485.3 870.3,482.4 871.2,482.9 870.0,484.3 871.9,482.5 872.6,483.9 M880.0,467.0 881.0,467.0 880.9,466.0 881.8,466.0 883.5,464.1 884.1,465.2 885.6,465.2 881.8,465.3 883.6,463.3 885.1,465.4 886.5,463.5 886.7,463.6 884.8,463.7 884.2,465.8 884.7,465.9 885.1,466.9 882.4,464.9 884.1,467.0 883.6,469.0 883.1,469.9 882.7,466.8 882.4,467.8 881.1,466.8 880.9,465.8 881.8,466.8 883.6,464.8 886.1,464.9 883.3,465.0 880.9,463.0 880.8,466.2 880.7,469.2 881.6,468.1 881.4,466.1 882.2,465.1 883.9,467.2 885.4,465.2 883.7,464.2 884.3,465.3 883.7,464.4 882.2,464.5 885.0,467.5 882.3,467.5 885.0,464.5 883.4,464.6 879.9,467.7 881.0,466.6 883.8,469.7 884.3,468.6 885.8,466.5 883.0,466.5 885.7,463.5 M897.0,488.0 899.0,490.0 901.9,493.0 899.6,492.8 902.4,489.7 901.0,490.7 898.8,492.6 897.7,492.5 899.6,492.4 899.4,495.3 902.3,492.2 899.9,494.1 901.7,491.9 900.4,490.9 899.2,490.8 896.1,487.7 895.1,488.7 895.2,486.7 896.4,485.8 894.4,485.8 894.6,484.8 896.7,484.9 898.8,487.0 898.6,489.0 900.5,489.0 901.3,489.0 901.0,487.9 901.8,488.9 899.4,486.9 898.3,486.9 898.2,486.0 898.1,489.0 897.0,490.0 897.0,487.0 897.0,489.0 899.0,491.0 899.9,491.9 897.7,491.8 896.7,492.7 896.7,491.6 895.7,491.5 894.8,492.5 892.9,490.4 894.2,489.3 896.4,491.3 893.4,488.2 895.7,490.2 897.7,488.1 896.7,487.1 893.7,487.2 890.9,487.2 890.3,487.2 892.8,487.2 894.0,486.2 893.2,485.3 890.5,485.3 891.9,486.4 894.2,488.4 896.4,488.4 893.5,485.4 892.7,485.5 M914.0,474.0 913.0,475.0 911.1,474.9 912.3,475.8 915.4,475.7 916.3,476.5 915.1,476.3 914.1,477.1 915.1,475.8 917.0,473.7 918.8,473.7 915.5,476.7 915.4,477.5 912.3,480.2 912.4,482.6 910.5,481.9 910.7,480.2 911.9,478.6 912.1,479.2 911.2,477.7 912.4,476.4 915.5,476.2 915.4,475.0 916.3,473.9 915.2,473.9 917.1,471.9 915.9,472.1 915.8,471.3 918.6,468.5 921.3,472.0 918.9,472.2 920.5,470.3 920.1,473.7 916.7,470.7 918.5,471.0 918.2,469.3 919.0,468.7 919.6,468.2 920.3,469.7 918.9,469.1 921.5,469.5 924.1,469.9 922.4,471.3 922.8,471.5 925.3,474.7 924.5,475.7 922.8,474.5 921.3,473.5 923.8,473.5 925.2,473.6 922.4,475.6 921.9,476.5 919.4,478.2 919.0,479.9 918.7,480.3 917.4,480.8 919.2,482.2 917.8,482.4 919.6,483.7 920.2,482.8 920.8,481.0 919.4,479.4 918.0,477.9 918.7,477.6 919.4,476.3 917.1,474.1 916.9,475.1 915.7,474.0 918.6,474.0 918.3,472.0 918.0,475.2 916.7,476.1 919.6,472.9 918.2,473.0 914.9,476.1 917.9,472.9 917.6,476.0 920.4,472.8 919.0,473.9 920.6,475.9 920.2,477.7 M915.0,475.0 916.0,476.0 914.9,475.9 916.9,477.8 915.8,476.6 915.8,473.5 915.7,471.6 915.7,473.9 915.6,473.0 914.6,472.1 915.6,473.4 916.6,473.5 914.5,471.6 912.5,473.9 912.7,476.0 914.8,477.9 914.8,475.7 917.8,475.6 918.7,474.6 916.4,476.6 915.3,475.5 912.3,475.4 912.5,473.4 911.6,473.5 910.9,474.6 908.1,471.7 907.6,471.9 910.1,474.2 908.4,476.2 906.8,478.1 907.4,478.9 908.9,478.6 908.3,478.3 905.7,481.0 908.3,478.6 910.7,478.3 911.0,481.0 912.3,479.6 911.5,480.2 913.7,479.8 912.8,480.4 913.9,480.0 916.0,481.6 918.9,481.1 917.7,479.6 915.5,481.3 912.5,477.8 912.6,476.6 912.8,474.4 911.9,475.5 914.1,477.4 915.2,478.2 913.2,476.0 913.3,476.9 914.4,477.8 917.4,480.6 917.3,482.1 919.1,481.6 920.9,479.0 921.5,479.7 920.1,478.4 920.7,478.1 919.4,476.9 916.1,479.7 916.0,478.3 915.9,480.1 917.9,481.7 918.7,481.2 920.4,482.7 922.1,482.1 918.6,481.5 916.4,479.0 917.3,478.7 916.1,477.4 914.1,477.2 912.1,477.1 915.3,473.9 912.3,477.0 912.5,478.8 910.6,478.5 909.9,477.3 912.3,477.1 914.4,478.9 917.5,478.6 920.3,481.3 921.0,480.8 919.6,480.4 920.3,480.0 918.9,480.6 918.7,478.1 919.4,477.9 M928.5,460.0 928.5,463.0 930.5,464.8 930.4,461.6 930.3,458.5 930.2,459.6 929.1,458.6 927.1,460.7 927.1,458.6 925.2,460.7 926.4,460.7 924.5,460.6 923.7,460.6 923.0,459.6 924.3,458.6 925.5,459.7 922.7,462.7 925.0,464.5 925.2,463.3 925.4,461.1 923.6,461.0 923.8,459.0 922.1,457.0 923.5,456.2 923.7,453.4 925.0,452.8 924.2,453.2 922.4,453.6 922.8,455.9 923.1,457.1 922.4,456.3 922.7,455.5 922.0,454.8 925.4,458.0 926.6,458.2 923.7,458.3 925.9,458.4 927.1,458.4 927.2,456.5 925.2,458.7 927.4,458.8 927.5,460.9 926.5,459.8 927.6,459.8 925.7,457.8 924.8,459.0 924.1,460.0 925.3,460.0 928.5,460.0 929.5,460.0 930.4,461.0 930.3,459.0 930.2,460.0 932.1,462.0 930.9,460.9 933.8,463.8 931.5,461.6 931.3,459.5 932.2,460.6 930.0,462.5 930.9,462.4 928.8,460.3 926.7,458.2 924.8,458.3 923.0,460.4 923.3,458.4 924.6,458.5 922.8,458.6 926.2,455.7 926.3,454.9 927.4,455.2 926.5,454.5 925.6,453.8 926.7,455.1 927.8,455.4 926.9,455.6 926.0,454.9 926.1,453.2 927.2,452.5 928.3,454.0 927.3,455.3 926.4,456.5 925.5,457.7 925.7,455.9 922.8,453.1 921.1,453.5 921.5,451.8 922.9,453.3 921.2,453.7 920.6,454.0 920.1,454.3 921.5,453.7 922.9,455.0 925.2,457.3 925.4,458.4 923.6,456.5 926.9,459.7 927.0,458.7 927.0,457.8 927.1,458.9 927.2,456.0 929.3,454.2 929.2,455.5 931.2,455.8 932.0,456.0 931.8,459.2 932.7,458.3 934.4,456.4 931.1,459.6 934.0,462.6 934.7,461.4 M950.5,458.5 948.5,458.5 951.8,458.5 950.6,458.5 951.6,457.5 951.4,458.6 951.3,456.6 949.1,458.7 951.4,460.7 951.2,459.5 950.1,459.5 951.2,459.4 951.1,457.3 954.0,460.4 953.4,458.3 954.9,458.3 956.2,458.3 956.2,458.3 954.3,457.3 955.7,455.4 953.8,454.7 953.3,456.0 953.8,456.2 952.3,456.3 952.0,458.5 951.7,455.5 951.5,453.7 950.4,453.1 951.4,454.5 952.2,455.8 952.9,455.1 951.5,454.3 950.4,454.6 949.4,455.9 947.6,454.1 945.1,451.5 948.0,452.0 950.4,450.5 947.4,448.2 948.9,449.0 951.2,449.7 953.1,450.4 952.6,449.0 955.3,446.8 953.5,447.7 952.0,448.5 951.8,448.3 951.5,450.1 950.4,451.8 947.4,449.3 948.9,450.0 950.2,450.7 948.2,453.3 948.6,450.7 946.9,453.3 946.5,452.7 M956.0,438.3 957.0,438.3 958.0,438.3 959.9,440.3 960.7,441.1 957.5,440.8 957.5,441.6 955.4,441.2 953.4,442.9 952.5,441.5 953.7,440.1 954.8,439.9 955.8,439.8 957.8,439.6 959.8,441.5 961.6,443.2 959.4,442.7 957.3,440.2 959.2,440.0 960.1,439.9 962.9,436.7 959.6,439.9 959.5,440.7 957.4,440.5 958.3,441.2 956.2,442.9 957.2,441.5 958.2,442.1 956.1,439.7 955.1,440.6 957.1,442.4 959.1,443.9 961.9,446.4 960.7,446.5 960.5,447.7 957.3,443.7 954.3,446.2 955.4,445.4 952.4,444.7 950.5,446.0 950.7,446.2 951.0,447.4 949.2,448.5 947.4,445.4 947.8,445.7 948.1,446.0 946.4,445.2 943.8,444.5 942.3,445.8 939.8,448.1 940.4,446.1 941.1,444.3 941.6,444.7 942.2,445.0 943.8,443.3 947.2,439.8 944.6,439.7 946.0,439.5 946.4,437.4 947.8,437.5 948.1,436.6 948.4,437.8 949.7,438.8 948.0,436.8 948.3,434.9 950.6,433.3 951.8,433.8 951.0,435.2 951.2,432.5 951.4,431.1 950.6,432.9 948.8,435.4 946.1,438.7 949.5,435.7 949.7,437.9 948.0,440.0 945.3,439.8 944.7,439.7 944.1,439.5 942.6,437.4 940.1,437.5 942.8,439.6 945.3,441.4 944.7,442.1 947.2,441.7 948.5,440.4 947.8,440.2 945.1,443.0 946.6,441.5 946.9,439.2 947.3,437.1 949.6,435.2 949.9,436.5 950.1,437.7 953.4,434.8 954.5,436.1 954.5,433.3 954.6,431.9 954.6,434.5 957.7,431.9 957.6,430.6 959.6,433.3 959.4,434.8 960.3,436.2 959.1,437.4 962.0,434.5 959.8,434.9 959.6,434.2 960.5,435.7 959.3,434.9 957.2,437.3 M974.7,433.5 973.7,433.5 973.8,436.5 973.9,438.1 975.0,438.6 972.0,441.0 969.3,443.1 971.9,442.0 970.3,439.0 970.8,436.3 972.3,435.0 974.5,432.8 973.6,433.9 974.7,433.8 973.7,433.8 972.8,434.8 970.0,434.6 973.6,434.5 975.7,436.4 978.6,433.0 975.1,433.1 976.1,432.1 973.9,430.3 975.0,429.7 975.0,429.1 975.9,430.6 974.8,431.0 974.8,429.3 976.8,429.8 978.5,428.2 977.1,429.8 977.8,429.3 974.4,432.8 972.5,432.9 972.7,429.9 973.0,428.4 972.2,430.0 970.5,432.4 971.0,434.5 969.4,434.4 970.0,436.3 970.6,438.0 974.1,434.4 976.1,434.3 977.0,435.2 974.7,437.0 974.7,437.6 977.7,437.1 975.3,434.7 978.3,431.5 975.9,433.8 977.7,435.7 978.4,434.5 979.9,432.4 977.3,432.5 979.0,432.6 978.5,429.7 979.0,430.2 978.5,432.6 978.1,431.7 974.7,431.9 M991.0,431.0 990.0,430.0 990.1,431.2 992.1,429.1 990.1,431.4 988.1,429.4 989.3,430.6 987.5,432.7 986.7,432.4 984.0,435.2 984.5,433.5 986.0,433.1 988.4,434.7 991.6,431.1 994.5,431.1 993.3,430.1 994.1,431.2 994.9,431.2 993.6,431.2 993.4,433.1 994.2,433.8 994.0,432.3 990.8,435.1 990.8,432.4 993.8,435.2 992.6,435.5 992.5,431.8 992.4,433.6 992.3,434.2 990.2,435.7 989.2,433.9 988.4,434.4 986.6,431.9 985.9,430.7 983.3,430.8 981.8,432.8 983.5,431.5 986.1,429.4 985.4,429.7 986.8,428.9 989.1,427.2 991.3,425.9 989.3,424.7 989.4,424.8 989.5,428.8 989.6,428.2 989.7,427.6 988.8,429.2 988.0,429.5 990.2,431.7 990.2,432.6 990.3,431.3 992.4,431.3 991.3,431.2 991.2,433.2 989.2,430.8 989.4,428.9 991.5,431.2 988.4,434.2 988.6,434.7 988.8,437.1 991.0,438.1 993.0,436.9 993.8,436.9 992.6,434.9 993.5,434.3 992.3,433.7 989.2,430.3 989.3,431.4 989.5,434.3 990.6,434.8 M1012.0,382.0 1012.0,385.0 1010.0,382.9 1008.1,384.8 1009.3,385.7 1010.4,384.6 1011.5,384.5 1009.5,384.4 1009.7,387.3 1006.8,384.1 1007.0,381.0 1005.3,379.0 1007.6,381.2 1008.8,382.2 1007.0,382.2 1008.2,381.2 1008.4,380.2 1009.6,379.3 1007.7,381.4 1004.9,378.4 1007.3,378.6 1010.5,378.7 1012.6,378.8 1012.6,376.9 1012.5,379.1 1012.5,382.3 1014.5,384.2 1017.4,381.2 1017.1,379.2 1016.8,380.3 1019.6,383.4 1019.2,380.3 1018.9,381.4 1015.5,381.4 1013.3,381.4 1012.3,381.5 1012.3,380.5 1012.2,382.5 1012.2,383.5 1014.2,383.5 1013.1,383.4 1016.1,383.3 1015.9,384.3 1016.7,385.2 1016.4,384.1 1016.2,386.0 1015.0,384.8 1014.8,386.7 1014.7,387.5 1017.6,387.3 1017.3,384.1 1020.0,381.0 1020.6,381.1 1017.2,381.1 1015.9,380.1 1015.7,377.2 1016.6,376.4 1015.3,377.6 1017.2,375.8 1018.9,378.0 1018.6,375.2 1016.2,377.5 1018.0,377.6 1019.7,375.8 1017.3,378.1 1019.1,376.2 1020.7,376.4 1018.3,374.7 1019.0,374.0 1016.6,374.3 1015.4,373.6 1017.2,375.9 1018.0,377.1 1016.7,376.3 1016.4,373.6 1014.2,373.9 1014.1,371.2 1015.0,372.6 1012.8,375.0 1014.8,373.3 1015.7,374.6 1014.5,374.9 1015.3,376.2 1017.2,378.4 1015.9,377.6 1015.7,379.7 1014.5,380.8 1014.4,382.9 1017.3,385.8 1018.0,386.7 1014.7,389.5 1012.6,391.2 1010.6,392.8 1007.6,395.4 1006.9,395.9 1007.1,393.3 1008.4,391.9 1011.5,388.5 1011.6,387.2 1011.6,389.0 1008.6,391.8 1010.8,389.4 1010.8,386.1 1008.9,387.9 1006.0,390.7 1006.3,393.3 1005.6,391.9 1004.9,391.5 1006.3,391.1 1008.6,390.8 1008.8,392.4 1006.9,394.0 1008.2,393.5 1009.4,394.1 1011.5,391.6 1011.5,393.2 1008.5,389.8 1011.7,392.5 1014.7,389.1 1011.6,388.8 1010.6,389.5 1008.7,389.2 1011.8,388.9 1008.9,385.7 1012.0,385.5 1014.0,385.4 1015.9,387.2 1017.7,389.0 1019.4,388.8 1016.1,388.5 1014.9,388.2 1015.7,388.0 1013.5,387.7 1013.5,386.5 1014.4,386.3 1013.3,387.2 1011.2,389.0 1012.2,389.7 1010.2,389.4 1007.3,392.1 1009.5,393.7 1009.7,394.2 1009.8,391.8 1009.9,389.4 1009.0,389.1 1007.2,390.8 1008.4,391.4 1007.6,392.1 1006.8,392.7 1008.1,392.3 1011.3,394.9 1010.3,394.3 1009.4,392.9 1011.5,390.4 1014.5,390.1 1013.4,389.8 1010.3,386.5 1008.4,384.3 1008.6,383.2 1007.8,382.2 1010.0,384.1 1011.1,385.1 1011.1,387.9 1008.2,387.7 1010.4,387.5 1010.4,389.3 1013.5,386.0 1015.4,387.8 1013.3,387.6 1015.2,387.4 1017.0,389.2 M1026.0,412.5 1026.0,411.5 1028.0,413.6 1027.9,416.5 1027.8,415.2 1025.8,413.0 1026.8,413.9 1023.8,416.8 1021.8,414.5 1022.0,415.3 1022.2,414.1 1023.3,415.0 1023.4,415.8 1022.5,414.5 1023.7,415.4 1023.8,414.1 1021.8,416.0 1024.0,415.7 1023.1,415.5 1021.2,413.3 1020.4,414.2 1020.6,412.1 1021.8,411.1 1022.0,410.2 1021.1,411.4 1019.3,413.5 1021.6,411.4 1020.8,412.5 1024.0,415.5 1027.1,418.3 1026.0,417.8 1027.0,418.4 1028.0,417.9 1028.9,416.5 1025.8,416.2 1028.8,415.9 1028.7,417.6 1027.6,416.2 1024.5,412.9 1025.6,411.9 1025.6,410.0 1023.6,410.2 1026.7,410.3 1026.7,411.5 1025.6,410.6 1028.7,413.7 1028.6,414.6 1027.5,413.5 1024.4,413.4 1027.5,413.3 1028.4,414.3 1029.3,414.1 1030.2,415.0 1029.0,414.8 1030.9,416.6 1028.7,418.3 1028.6,416.8 1027.5,415.5 1028.4,416.3 1026.3,416.0 1029.3,415.7 1030.2,414.5 1032.0,414.3 1031.8,417.2 1031.6,414.8 1032.3,413.6 1034.1,413.5 1033.8,411.5 1034.5,412.5 1031.1,409.5 1030.9,410.8 1033.7,407.9 1035.4,410.3 1035.1,412.4 1034.7,415.4 1037.4,412.2 1036.9,415.2 1037.5,414.0 1037.0,414.9 1038.6,414.7 1037.1,415.5 1034.6,415.3 1034.3,417.1 1033.0,415.7 1034.7,417.5 1034.4,418.1 1034.0,416.6 1031.7,414.3 1031.5,413.2 1030.3,413.1 1033.1,413.1 1031.8,413.0 1028.6,416.0 1029.5,414.7 1027.4,412.5 1025.3,414.5 1023.3,414.4 1023.4,411.2 1022.5,410.3 1025.7,413.5 1024.7,414.4 1024.7,417.3 1022.8,416.9 1023.9,416.6 1023.0,415.2 1024.1,415.0 1024.2,417.8 1022.3,419.4 1022.4,420.9 1022.5,418.2 1024.7,415.8 1022.7,415.5 1025.9,415.3 1023.9,417.1 1027.0,413.7 1029.9,413.6 1029.8,416.5 1028.6,416.2 1028.5,413.9 1028.4,412.8 1027.3,411.8 1027.3,409.8 1029.2,412.0 1028.1,412.1 1030.0,410.1 1031.8,412.3 1029.6,412.3 1031.5,410.3 1032.3,409.5 1033.0,408.7 1033.7,409.0 1034.4,409.3 1032.1,411.6 1029.9,409.6 1031.7,411.9 1028.5,411.9 1030.4,409.9 1031.2,411.1 1030.0,410.3 1029.8,411.4 1027.7,413.5 1029.6,411.4 1031.5,411.5 1034.3,411.6 1033.9,409.7 1033.6,406.9 1035.3,409.3 1035.0,411.6 1034.6,410.6 1035.3,411.8 1034.9,409.8 1034.5,408.1 1035.2,407.4 1034.8,409.8 1034.5,412.0 1032.2,410.0 1033.9,408.2 1034.6,407.6 1034.3,409.0 1033.9,411.2 1031.6,409.3 M1045.0,411.0 1047.0,411.0 1043.9,414.0 1044.0,415.8 1047.0,418.4 1045.9,417.9 1046.9,418.4 1047.8,416.8 1050.6,416.4 1047.3,413.0 1047.2,411.9 1047.1,410.8 1045.0,408.8 1044.0,410.0 1044.1,408.0 1045.1,407.3 1043.1,405.5 1044.2,405.9 1044.2,409.3 1044.3,407.4 1047.3,410.7 1050.2,407.7 1049.9,406.0 1050.7,405.3 1049.4,405.7 1050.2,405.1 1049.9,403.6 1046.7,404.1 1047.6,405.6 1044.5,409.0 1046.5,411.2 1046.4,413.1 1049.3,410.0 1052.1,413.1 1053.8,412.9 1052.3,412.8 1049.0,409.6 1050.8,407.7 1052.5,406.0 1049.1,409.3 1046.9,409.5 1043.8,406.6 1041.9,406.9 1040.0,405.2 1039.3,406.6 1042.6,404.0 1044.7,402.5 1044.7,405.1 1045.7,405.5 1047.7,407.9 1046.5,409.2 1046.5,411.3 1044.4,411.3 1044.4,414.3 1042.5,416.0 1039.6,418.6 1037.8,418.1 1036.2,419.6 1038.6,418.9 1038.0,418.4 1040.3,415.8 1041.6,416.5 1040.7,416.1 1038.9,415.7 1038.2,416.3 1035.6,418.9 1036.0,420.4 1036.5,422.7 1037.9,420.8 1039.3,419.1 1041.6,416.5 M1062.5,396.0 1059.5,399.0 1061.6,396.9 1059.7,398.9 1059.8,396.8 1059.9,399.8 1058.0,401.7 1058.2,399.6 1060.3,399.5 1060.4,398.5 1062.5,398.4 1062.5,399.3 1061.5,400.3 1060.5,401.2 1058.6,403.1 1060.8,404.9 1059.8,405.7 1060.9,405.5 1058.0,405.3 1058.2,404.1 1058.4,406.9 1056.5,406.7 1054.8,404.4 1053.1,406.2 1053.4,407.0 1054.8,405.8 1055.1,408.5 1055.4,405.3 1055.7,403.1 1055.9,403.9 1059.2,406.7 1059.3,405.5 1057.5,405.3 1060.7,405.1 1057.7,401.9 1058.9,400.7 1058.1,400.6 1056.2,400.5 1057.5,399.4 1056.7,400.4 1054.9,400.3 1057.2,402.2 1056.4,401.0 1058.7,400.9 1061.8,400.8 1063.8,402.7 1061.8,400.5 1064.8,400.4 1061.7,403.3 1061.8,404.2 1060.8,404.0 1060.8,405.8 1062.9,405.6 1063.9,406.4 1064.8,407.2 1064.7,404.9 1065.7,404.7 1065.5,406.5 1064.4,407.3 1063.3,408.0 1064.3,406.8 1065.2,405.5 1066.1,404.3 1069.0,404.1 1066.7,404.0 1066.6,401.8 1067.4,402.6 1069.2,400.5 1066.9,402.4 1065.8,401.3 1063.6,399.1 1062.6,400.1 1064.6,402.0 1066.5,403.8 1067.3,404.7 1067.2,405.5 1067.0,406.3 1066.8,405.0 1064.6,404.8 1062.5,404.6 1062.5,407.5 1064.5,409.2 1065.5,409.9 1066.3,409.6 1066.2,408.3 1068.0,406.0 1069.8,403.8 1070.5,402.6 1068.2,404.5 1067.0,403.3 1067.8,404.1 1067.6,404.9 1070.4,407.7 1067.1,410.5 1063.9,410.2 1065.9,407.9 1063.7,407.6 1064.7,406.3 1063.6,407.1 1064.5,407.9 1067.5,407.6 1067.3,406.3 1068.1,407.1 1064.9,409.9 1067.8,409.5 1066.6,408.2 1068.4,406.0 1070.2,407.8 1068.9,407.5 1069.6,407.2 1068.3,406.0 1068.1,402.8 1070.9,402.6 1068.5,402.5 1067.3,401.3 1069.1,399.2 1069.9,399.1 1071.6,399.1 1069.2,399.0 1070.9,398.9 1070.6,399.9 1072.3,401.8 1072.9,402.7 1074.5,400.5 1075.0,400.4 1074.5,402.3 1076.0,400.2 1076.5,400.1 1077.0,401.0 1077.4,399.9 1074.8,399.8 1072.3,401.7 1072.9,401.6 1072.5,403.5 1073.1,403.3 1074.7,405.1 1074.2,401.9 1073.8,400.8 1072.3,401.7 1072.9,400.6 1069.5,397.5 1067.2,397.4 1068.0,397.4 1067.8,399.4 1066.6,398.3 1065.5,399.2 1065.3,398.2 1065.2,399.1 1065.1,400.0 1062.0,403.0 1059.0,402.8 1057.2,400.6 1055.4,402.5 1056.7,402.4 1056.9,401.3 1056.1,400.1 1054.4,402.0 1056.7,403.9 1059.9,403.7 1059.0,404.6 1061.2,402.4 1062.2,401.2 1065.2,404.1 1067.1,405.9 1065.9,406.7 1064.8,407.5 1062.7,409.2 1065.7,411.9 1067.6,411.6 1070.4,408.2 1072.1,408.0 1074.7,404.7 1073.2,403.5 1074.8,401.3 1075.3,400.2 1074.8,397.1 1075.3,398.1 1072.8,400.0 1071.4,401.0 1071.0,397.8 1072.7,397.8 1073.3,398.8 1073.9,397.7 1072.4,396.7 1074.0,394.7 1071.6,396.7 1068.2,396.7 1070.0,398.7 1069.7,400.6 1071.4,400.5 1070.1,401.4 1067.8,403.3 1067.6,400.1 1069.4,398.0 1068.1,399.0 1066.9,397.9 1066.7,394.9 1063.5,391.9 1060.5,389.0 1063.6,386.1 1062.5,386.4 1062.5,388.6 1065.5,385.7 1063.4,388.0 1063.4,390.1 1062.3,391.3 1064.3,389.4 1062.3,387.5 1065.3,387.7 1064.2,386.9 1064.1,384.1 1064.0,383.4 1065.0,383.6 1066.9,385.9 1063.7,386.1 1064.7,385.4 1064.6,386.6 1063.5,387.8 1063.5,387.0 1063.4,386.2 1066.4,386.4 M1080.5,407.0 1081.5,408.0 1081.4,407.0 1081.4,406.0 1079.3,408.0 1081.4,406.0 1081.3,407.0 1081.3,404.0 1082.2,403.1 1083.1,402.1 1084.9,402.2 1084.7,400.3 1086.4,402.4 1083.0,399.5 1082.8,401.7 1079.7,398.8 1079.7,400.9 1081.8,403.0 1079.7,403.1 1076.8,400.2 1075.0,398.3 1078.4,398.5 1079.5,399.6 1079.6,401.8 1077.6,401.9 1074.8,405.0 1074.2,406.0 1074.6,404.0 1078.0,407.1 1080.1,405.1 1080.2,404.1 1080.2,405.2 1080.2,404.2 1077.2,401.3 1076.4,402.4 1074.7,402.5 1077.1,402.6 1079.3,400.6 1078.4,400.8 1079.5,400.9 1079.6,400.0 1076.6,400.1 1075.9,399.3 1075.2,399.4 1076.5,398.5 1077.8,397.7 1078.0,394.9 1075.1,392.1 1078.5,395.4 1076.6,397.6 1076.9,399.8 1075.1,397.9 1074.5,398.1 1075.9,399.3 1073.2,399.4 1074.6,400.6 1072.0,397.7 1070.6,399.9 1070.2,400.0 1071.9,400.1 1073.5,401.3 1075.9,399.4 1078.2,397.5 1075.4,400.7 1075.7,401.8 1073.0,398.9 1072.5,400.1 1072.0,400.2 1073.6,399.3 1076.0,399.5 1075.3,400.6 1075.7,402.7 1076.0,403.8 1076.3,401.9 1077.5,401.0 1077.7,402.1 1077.9,401.2 1078.1,402.3 1077.2,403.4 1077.5,400.4 1078.7,399.6 1078.8,401.7 1080.9,403.8 1083.9,406.9 1081.6,404.9 1083.6,402.9 1085.4,401.0 1086.1,402.1 1084.7,402.2 1085.4,402.3 1086.1,402.4 1083.7,400.5 1080.5,403.6 1078.5,405.6 1078.6,404.7 1078.8,403.7 1079.9,402.8 1081.9,404.9 1083.8,402.9 1082.6,403.0 1084.5,403.1 1084.2,405.1 1084.0,406.2 1084.7,406.2 1082.5,406.2 1081.3,405.2 1081.3,404.2 1082.2,405.3 1079.1,405.3 1079.2,402.4 1077.3,400.4 1075.5,402.6 1072.8,405.7 1073.3,406.7 1076.8,409.7 1080.0,409.6 1080.1,412.6 1082.1,410.5 1081.0,409.4 1080.0,410.4 1082.0,408.3 1083.9,406.3 1086.7,406.3 1085.3,405.3 1085.0,407.3 1086.7,407.3 1086.3,409.3 1085.9,411.3 1085.5,408.2 1084.2,407.2 1084.0,405.2 1082.7,405.2 1080.6,407.2 1081.6,407.2 1082.5,407.2 1081.4,408.2 1080.3,407.2 1078.3,405.2 1077.5,406.2 1077.7,408.3 1075.9,408.2 M1096.0,390.0 1096.0,391.0 1096.0,387.9 1095.0,387.1 1094.1,386.4 1096.3,386.7 1097.3,387.0 1099.1,385.2 1098.8,382.7 1099.4,383.3 1101.0,385.9 1099.4,386.3 1101.0,388.6 1101.4,388.7 1101.8,389.8 1100.1,390.9 1102.6,387.8 1103.8,390.0 1104.9,392.0 1101.9,389.8 1100.2,388.8 1099.7,386.9 1100.2,387.2 1100.7,387.4 1100.2,388.7 1101.7,386.8 1104.0,384.1 1103.1,382.6 1103.2,383.3 1100.4,383.9 1099.9,386.4 1099.4,383.7 1100.0,384.3 1096.5,381.8 1095.5,383.5 1095.5,385.1 1095.6,387.5 1094.6,388.8 1095.8,387.9 1094.8,387.1 1098.0,390.3 1096.7,391.3 1097.6,392.2 1100.4,392.0 1097.9,393.8 1100.7,396.5 1098.1,393.9 1097.9,390.5 1098.7,390.5 1096.3,390.5 1097.3,389.4 1094.2,392.5 1091.4,392.2 1091.9,393.0 1090.4,394.8 1092.1,395.4 1092.5,395.9 1091.9,395.4 1089.4,391.9 1090.2,393.7 1087.9,396.4 M1137.0,403.5 1139.0,405.5 1137.9,406.4 1139.9,404.3 1139.8,402.2 1140.7,401.3 1142.6,401.4 1144.4,401.5 1143.2,401.6 1142.0,402.7 1142.8,401.7 1142.6,400.8 1140.5,399.0 1139.4,398.2 1137.3,400.4 1139.3,402.6 1139.2,401.6 1138.1,401.7 1136.1,401.8 1134.1,403.9 1133.2,402.9 1133.3,399.9 1134.4,400.1 1135.5,401.3 1138.6,404.4 1138.5,405.3 1137.5,404.2 1137.5,402.2 1140.4,405.3 1138.3,407.2 1140.3,405.0 1141.2,405.9 1140.1,404.8 1138.0,406.7 1138.9,405.6 1138.9,407.5 1138.8,406.3 1140.7,404.1 1140.6,407.1 1142.5,406.9 1139.3,403.8 1138.3,404.7 1138.2,405.7 1138.2,406.6 1141.1,403.4 1142.0,402.4 1140.9,402.5 1139.7,401.5 1142.6,398.6 1140.5,400.9 1138.3,399.0 1139.3,398.2 1140.2,399.5 1137.1,396.7 1138.1,396.0 1136.1,398.4 1138.1,398.7 1137.1,398.9 1135.1,399.1 1132.1,399.3 1131.3,398.6 1128.5,398.8 1129.8,400.0 1132.0,402.2 1135.1,399.3 1135.2,400.5 1136.3,399.6 1137.3,400.8 1139.3,403.0 1139.2,404.0 1141.1,404.0 1141.0,402.9 1140.9,405.0 1138.7,402.9 1141.7,402.9 1140.5,404.0 1138.4,403.9 1140.4,401.9 1138.3,400.0 1138.2,403.2 1137.2,402.2 1137.2,403.2 1139.2,403.3 1139.1,402.3 1140.0,402.3 1139.9,403.4 1137.9,405.4 1136.8,406.3 1138.8,406.2 1137.8,407.0 1138.7,405.9 1137.7,406.7 1137.7,405.6 1137.6,407.5 1138.6,407.3 1141.6,410.1 1142.4,409.8 1142.3,411.4 1142.1,409.0 1141.9,407.8 1139.8,409.6 1142.7,409.3 1144.5,409.0 1145.3,408.7 1143.0,406.4 1142.8,408.3 1144.6,408.0 1142.4,405.8 1142.2,403.7 1143.0,403.7 1139.8,406.7 1137.7,404.5 1140.7,407.5 1141.6,406.3 1141.5,407.1 1139.3,409.0 1139.2,405.7 1140.2,405.6 1138.1,403.5 1137.0,403.5 1134.0,400.5 1133.1,400.6 1134.3,401.8 1134.3,403.9 1132.4,405.8 1132.6,402.7 1134.7,402.8 1133.8,401.8 1132.9,402.9 1132.0,402.9 1130.2,402.9 1132.4,401.0 1132.5,402.1 1134.7,400.2 1131.8,403.3 1130.9,404.3 1133.1,406.3 1134.2,406.2 1136.3,406.0 1136.4,404.9 1136.4,405.8 1134.4,403.7 1134.5,404.7 1137.6,401.6 1137.5,398.7 1135.5,399.0 1136.6,398.2 1135.6,399.5 1136.6,399.7 1135.6,399.9 1135.7,397.0 1135.7,396.4 1135.8,395.7 1138.8,396.1 1139.8,396.5 1137.7,396.8 1136.6,397.2 1136.7,396.5 1139.7,396.8 1139.6,398.2 1139.5,396.4 1137.4,396.8 1137.4,396.1 1134.4,399.5 1137.5,396.7 1137.5,398.0 1134.4,401.3 1137.5,404.4 1138.5,404.4 1141.5,407.3 1143.3,407.1 1144.1,407.0 1146.9,406.8 1147.6,405.6 1146.2,404.5 1146.9,405.5 1146.6,404.4 1147.3,404.3 1145.0,404.3 1145.7,404.2 1145.4,402.2 1142.2,399.3 1142.0,398.5 1140.9,398.7 1139.7,400.0 1137.6,398.1 1137.6,399.4 1138.6,398.6 1139.5,398.9 1137.5,401.1 1134.5,398.2 M1031.0,392.0 1031.0,394.0 1031.0,395.6 1033.0,396.9 1031.9,396.9 1031.9,392.9 1031.9,393.7 1031.8,396.4 1030.8,394.5 1030.8,393.0 1031.8,391.8 1028.8,391.8 1028.9,390.9 1030.9,389.1 1033.9,389.7 1034.9,391.1 1035.7,392.3 1038.6,392.3 1036.3,394.2 1037.2,392.8 1039.0,392.6 1038.7,393.5 1037.5,393.2 1038.3,393.0 1037.0,391.8 1036.8,389.8 1035.6,391.2 1034.5,390.4 1032.4,388.7 1031.3,390.4 1034.3,387.7 1031.2,391.6 1033.2,391.6 1032.1,390.7 1031.1,390.0 1030.1,389.4 1032.1,391.9 1033.1,392.9 1034.0,391.7 1033.9,394.8 1033.8,396.2 1036.7,395.4 1036.6,392.7 1036.4,391.6 1038.2,393.7 1036.0,391.3 1037.8,389.5 1038.6,391.0 1038.4,392.2 1039.1,391.1 1037.9,391.3 1038.6,392.4 1040.4,392.4 1040.1,395.3 1040.8,395.6 1040.5,393.9 1043.2,396.5 1044.8,397.6 1047.4,393.5 1046.8,394.2 1048.3,393.8 1046.8,392.4 1046.3,394.3 1042.8,390.9 1044.4,393.1 1044.0,393.9 1044.6,393.5 1047.1,393.2 1049.6,396.0 1052.0,398.2 1053.3,394.9 M1112.0,400.0 1113.0,400.0 1114.0,399.0 1111.9,397.1 1111.9,399.5 1110.9,400.6 1110.9,401.5 1110.0,402.3 1109.0,402.0 1110.1,402.7 1111.2,402.4 1114.2,405.1 1112.2,402.4 1113.1,403.1 1111.1,404.7 1112.1,403.1 1109.1,405.7 1111.2,403.0 1109.3,404.6 1110.3,405.0 1113.4,401.4 1111.3,401.2 1110.4,401.0 1110.4,398.9 1108.5,399.1 1111.6,399.2 1111.6,398.3 1111.6,399.5 1110.6,398.6 1110.7,400.7 1112.7,402.7 1114.7,402.3 1111.6,405.0 1109.6,402.4 1109.7,400.1 1107.8,398.1 1108.9,398.3 1112.0,398.5 1114.0,400.7 1111.9,398.6 1111.9,396.8 1113.9,395.2 1111.9,395.8 1110.9,396.4 1109.9,397.8 1112.0,396.1 1109.0,393.6 1108.1,393.4 1108.2,396.3 1106.3,398.7 1108.5,398.9 1111.6,402.0 1108.6,404.8 1108.7,402.2 1110.8,401.9 1110.9,400.6 1112.9,402.6 1115.9,402.2 1116.8,402.0 1116.6,400.7 1116.5,401.6 M846.4,503.3 849.0,501.4 847.8,499.5 850.0,496.2 849.4,495.5 850.9,492.5 852.9,491.5 854.7,491.5 855.9,490.6 858.7,490.0 859.7,487.2 862.9,489.2 865.8,488.9 866.2,488.3 867.7,486.3 871.6,483.4 871.8,483.8 876.0,482.4 878.0,481.0 M852.2,496.3 848.1,496.5 846.8,492.8 846.9,491.7 847.1,490.8 850.3,488.4 853.2,486.9 853.2,488.9 855.4,488.6 859.0,489.0 M852.3,500.3 853.6,497.3 857.5,496.6 858.1,494.6 859.1,492.9 862.5,490.9 864.1,490.0 865.4,490.4 869.4,490.3 870.9,486.7 872.9,486.3 874.0,486.0 M901.6,461.1 903.2,462.7 905.2,465.4 904.5,467.2 907.8,469.2 909.5,470.7 909.9,472.3 911.6,471.7 915.0,472.4 914.2,476.0 917.1,473.4 918.8,471.6 919.6,470.0 922.8,467.2 922.6,465.4 925.1,464.2 925.6,464.8 929.0,461.5 931.1,460.9 932.1,459.2 933.5,460.4 934.7,456.8 939.4,456.8 940.9,456.3 943.6,456.0 943.3,457.9 944.2,460.5 945.3,461.3 948.7,462.2 950.8,459.9 950.7,458.1 949.9,456.1 949.5,454.6 947.6,450.8 946.9,450.1 947.8,447.5 950.4,444.9 950.0,443.2 951.6,441.3 953.2,438.9 956.5,440.2 958.1,438.3 961.3,436.4 963.1,436.8 962.8,436.4 966.6,434.5 969.4,435.3 970.5,434.7 973.9,433.5 974.2,434.0 976.2,432.2 977.8,434.4 981.3,433.0 982.7,432.5 986.2,431.0 987.6,430.7 988.2,430.7 991.4,432.2 992.3,431.8 996.0,431.7 998.2,435.1 1000.1,433.4 1001.8,434.9 1004.2,436.4 1005.0,435.9 1005.8,434.2 1006.7,434.8 1008.3,433.3 1008.9,429.3 1010.4,427.1 1012.9,428.6 1013.6,432.4 1017.0,432.8 M1008.6,428.9 1010.3,426.0 1010.2,424.6 1010.4,421.0 1012.2,420.7 1012.0,416.6 1013.8,416.4 1016.8,414.5 1017.0,412.8 1019.8,412.0 M1018.7,389.6 1021.7,391.6 1024.5,392.1 1026.6,390.7 1027.6,392.1 1030.4,393.1 1030.9,393.8 1033.3,394.6 1035.7,394.9 1038.7,396.0 1042.0,396.7 1043.1,396.9 1045.4,395.8 1047.5,395.8 1050.1,395.7 1052.2,396.5 1052.7,396.6 1055.0,398.0 M1043.1,383.3 1045.3,380.9 1046.7,379.7 1046.1,377.2 1046.5,375.4 1049.1,376.0 1051.4,374.9 1053.0,373.4 1055.9,374.2 1057.7,373.9 1059.7,376.0 1060.6,376.2 1064.6,374.9 1066.8,377.2 1067.7,375.9 1070.8,378.3 1071.9,378.0 1073.5,377.9 1076.4,378.9 1079.0,378.0 M1035.7,402.4 1036.1,405.0 1037.3,405.3 1039.3,407.0 1040.6,408.5 1042.3,410.6 1044.1,410.6 1045.3,413.3 1047.3,412.4 1049.2,414.6 1051.2,415.2 1051.9,416.7 1052.8,419.4 1052.0,415.7 1052.1,414.8 1051.8,412.8 1051.8,411.5 1049.9,406.8 1047.1,406.9 1045.3,407.8 1044.3,405.3 1041.8,404.4 1040.0,404.0 M1099.5,394.4 1101.9,394.0 1103.5,396.2 1106.2,397.1 1106.8,397.2 1109.8,398.3 1111.8,398.0 1115.3,401.2 1115.6,400.3 1117.8,401.5 1119.8,402.8 1121.7,405.4 1124.0,405.0 M1086.7,397.9 1088.7,400.2 1092.7,399.8 1094.9,400.8 1096.6,404.4 1096.9,403.2 1100.7,405.6 1102.3,407.2 1104.6,407.2 1105.6,408.8 1106.8,409.7 1109.0,411.0 M1128.0,410.5 1130.4,412.5 1131.3,411.7 1132.6,414.0 1134.8,414.9 1136.1,418.0 1137.7,418.8 1141.2,419.3 1141.5,419.7 1140.6,422.7 1138.8,421.9 1136.0,424.0 M1118.1,417.9 1119.8,420.4 1120.8,421.8 1123.7,422.9 1124.9,424.7 1126.2,427.1 1128.7,427.7 1128.8,426.8 1130.3,430.7 1131.9,431.0 1133.4,433.6 1135.0,433.6 1138.4,436.4 1138.3,437.8 1142.2,439.9 1142.2,441.8 1143.7,443.3 1145.3,443.8 1146.5,446.1 1147.7,447.0 1149.0,448.0" fill="none" stroke="#000" stroke-width="1" stroke-linejoin="miter"/><path d="M865.9,592.5l0.0,0.9M846.8,600.3l0.0,2.2M805.9,561.7l-0.7,0.7M720.7,540.3l-0.8,0.8M780.1,571.3l1.5,0.0M841.0,599.9l1.8,0.0M698.7,525.4l0.0,2.3M783.8,577.6l-1.0,1.0M798.1,538.5l1.3,0.0M682.1,500.7l1.9,0.0M791.9,546.3l0.0,2.8M688.1,506.3l2.6,0.0M730.3,507.9l0.0,2.5M771.9,525.4l-0.6,0.6M852.1,577.9l1.8,1.8M734.0,519.3l0.6,0.6M805.3,569.6l0.0,1.2M669.9,499.3l0.0,1.7M783.0,520.6l2.6,0.0M845.5,551.9l1.4,0.0M856.1,600.4l-1.9,1.9M667.2,508.6l0.0,2.0M825.2,518.7l0.0,1.9M802.6,523.4l-1.7,1.7M686.5,507.3l-1.4,1.4M737.9,512.5l-1.7,1.7M838.8,614.7l0.0,1.1M852.7,605.3l2.4,0.0M820.0,569.3l1.9,0.0M748.1,522.1l0.0,1.6M866.9,535.4l-1.6,1.6M758.9,523.8l2.0,0.0M775.3,550.5l1.0,1.0M862.3,620.9l1.3,0.0M795.6,567.7l0.0,2.1M673.6,487.8l2.6,0.0M812.1,545.8l0.0,1.5M855.2,593.3l2.0,0.0M681.8,510.5l0.8,0.8M849.3,621.4l0.0,2.5M815.2,548.3l2.8,0.0M755.0,502.0l-1.2,1.2M835.7,585.6l0.6,0.6M740.5,508.5l0.8,0.8M868.6,602.7l2.6,0.0M846.0,568.1l0.0,1.4M794.7,525.5l2.5,0.0M835.9,544.0l2.0,0.0M839.1,528.3l0.8,0.0M837.7,570.7l-1.4,1.4M842.6,594.8l1.2,1.2M852.6,533.4l1.9,0.0M779.1,520.2l2.2,0.0M739.9,488.8l1.8,0.0M790.8,580.3l1.9,0.0M768.8,511.9l1.5,0.0M864.9,595.4l0.0,2.8M735.9,525.1l1.6,1.6M778.5,570.6l1.7,0.0M737.2,519.6l0.0,0.9M672.6,496.3l-1.4,1.4M850.8,619.2l0.0,2.6M833.1,547.3l2.7,0.0M850.3,602.4l-1.8,1.8M762.4,541.9l0.0,0.9M781.1,536.1l2.5,0.0M845.1,581.1l0.0,1.5M824.3,528.5l1.9,1.9M854.7,584.0l0.0,2.0M703.6,504.6l1.8,1.8M848.9,518.6l1.3,1.3M838.2,587.4l1.0,1.0M675.2,503.8l-0.6,0.6M730.6,481.9l0.0,0.9M731.9,517.3l1.2,1.2M864.0,582.1l1.9,1.9M765.5,524.7l1.9,0.0M838.0,536.5l0.0,0.8M782.6,542.3l-1.3,1.3M838.6,604.1l1.0,1.0M754.2,540.3l1.0,1.0M868.7,592.3l0.0,1.4M790.3,559.3l0.9,0.0M753.9,540.6l2.7,0.0M836.0,579.7l0.0,0.9M746.6,490.9l2.0,0.0M845.8,559.0l1.7,1.7M729.1,484.1l0.0,2.7M783.9,510.9l1.2,0.0M766.2,545.2l0.6,0.6M855.9,590.7l0.0,2.3M777.3,511.4l0.9,0.9M846.4,579.4l1.5,0.0M720.9,487.0l2.0,0.0M852.3,544.9l1.1,1.1M860.6,604.0l0.0,2.8M791.0,563.7l0.0,1.0M786.8,514.9l0.0,1.6M800.5,508.2l1.7,0.0M841.2,557.9l2.6,0.0M785.0,516.3l1.7,0.0M767.6,542.7l1.9,1.9M782.6,580.4l2.4,0.0M769.3,513.6l2.0,0.0M716.0,529.4l-1.3,1.3M851.3,558.3l0.0,2.7M812.5,569.2l-2.0,2.0M802.0,527.6l1.3,0.0M844.3,558.2l1.7,0.0M731.6,495.5l0.8,0.8M855.2,541.8l0.0,2.4M869.4,608.4l0.0,1.7M772.2,545.6l0.8,0.0M777.9,537.9l1.9,1.9M785.7,512.8l1.8,0.0M704.6,524.8l-0.8,0.8M703.2,540.0l-1.1,1.1M850.6,544.7l0.0,1.7M773.9,523.2l0.0,1.7M791.0,531.0l-1.1,1.1M746.1,492.0l1.7,0.0M694.8,526.7l0.8,0.0M802.3,507.7l0.0,1.5M813.0,536.3l-1.2,1.2M705.4,499.1l1.6,0.0M829.7,564.8l0.0,1.1M790.9,541.3l1.2,0.0M819.6,538.8l1.3,0.0M863.3,542.5l1.8,0.0M740.9,488.7l0.0,2.3M724.4,535.1l1.9,0.0M731.2,532.5l0.0,0.8M708.1,534.4l1.0,1.0M772.7,553.6l0.0,1.9M708.0,517.2l1.8,0.0M786.7,554.4l0.9,0.9M824.0,515.5l1.8,0.0M781.1,546.7l-1.8,1.8M775.2,508.9l0.9,0.0M782.3,535.0l0.0,1.7M797.4,519.8l0.0,1.6M776.2,553.5l0.0,1.4M833.0,575.2l2.7,0.0M869.6,597.9l0.0,2.4M798.1,493.8l0.0,1.5M795.3,554.1l2.5,0.0M682.9,510.4l2.8,0.0M786.3,576.0l1.6,0.0M861.5,586.7l1.9,0.0M846.0,528.7l-0.6,0.6M863.2,544.9l1.8,1.8M785.5,512.1l1.7,0.0M755.9,526.0l1.6,0.0M735.4,521.9l0.0,2.6M804.5,497.6l0.0,1.0M718.8,528.7l1.0,1.0M732.4,494.7l-1.5,1.5M710.4,497.3l1.8,1.8M856.3,620.7l-0.8,0.8M778.4,533.9l0.0,0.8M840.2,571.9l1.9,1.9M818.7,508.1l1.4,0.0M813.5,549.5l0.0,2.2M841.0,570.3l0.0,1.2M719.4,498.2l0.0,2.2M803.0,494.5l-1.7,1.7M835.5,532.2l2.1,0.0M810.9,543.0l0.0,2.8M786.2,546.6l1.9,1.9M738.9,521.2l1.7,1.7M768.1,515.9l-1.2,1.2M829.8,571.1l2.1,0.0M738.2,533.2l-0.6,0.6M756.4,512.8l2.2,0.0M789.4,543.1l0.0,0.9M832.9,596.9l0.0,1.8M743.6,497.7l1.9,1.9M840.6,584.7l-1.5,1.5M754.5,495.5l0.0,1.8M846.8,520.3l0.0,0.9M663.9,498.4l0.0,1.2M830.3,570.2l0.0,2.3M778.0,571.4l-1.2,1.2M842.6,571.5l0.9,0.9M817.2,529.8l1.6,1.6M821.7,550.7l1.7,0.0M828.2,564.6l0.9,0.9M852.4,612.2l0.0,2.3M859.2,577.7l1.7,1.7M755.1,517.0l1.5,1.5M731.8,539.8l0.6,0.6M787.3,567.3l2.8,0.0M761.2,540.2l1.4,0.0M759.7,528.5l2.8,0.0M748.8,529.7l1.9,1.9M764.7,530.0l0.0,1.9M829.1,527.1l0.0,1.5M857.4,578.6l-1.6,1.6M761.7,529.7l1.3,0.0M736.6,521.3l0.8,0.0M825.1,542.6l1.4,0.0M755.6,496.2l0.0,2.6M825.7,551.4l1.5,1.5M748.2,515.7l0.9,0.0M782.5,533.8l0.0,2.4M783.2,540.6l-1.2,1.2M666.9,491.0l2.2,0.0M782.6,549.3l0.0,1.6M855.3,547.2l1.7,0.0M690.0,516.0l0.0,0.9M795.8,538.9l0.0,1.6M832.2,608.4l1.7,1.7M804.1,560.3l2.1,0.0M775.4,506.7l1.3,1.3M708.3,515.0l-0.7,0.7M737.3,527.5l0.0,2.3M839.2,547.0l1.7,0.0M759.3,506.3l-1.8,1.8M825.8,526.0l0.0,1.1M832.4,601.6l-0.7,0.7M812.4,509.6l-1.7,1.7M753.7,528.4l1.4,0.0M788.9,568.7l2.1,0.0M842.3,545.7l2.8,0.0M687.8,504.6l0.0,2.6M820.3,516.5l0.0,1.4M719.7,513.4l2.3,0.0M690.1,510.8l2.0,0.0M855.5,551.5l1.0,0.0M684.7,499.3l-0.6,0.6M704.8,516.7l0.9,0.0M744.3,523.0l1.4,1.4M835.2,567.3l1.3,1.3M808.2,499.2l2.5,0.0M803.4,505.8l0.7,0.7M777.0,505.1l0.0,2.5M796.3,537.1l1.1,0.0M714.5,542.1l1.7,0.0M842.5,533.9l0.0,1.8M795.1,569.3l1.2,1.2M781.8,510.2l-1.2,1.2M728.4,531.1l0.9,0.9M710.4,498.0l1.5,1.5M693.4,519.7l1.6,0.0M724.5,521.0l1.1,0.0M722.7,497.0l0.0,1.0M749.9,504.5l0.7,0.7M820.7,554.8l-1.3,1.3M829.8,589.6l0.0,2.1M855.3,584.2l1.6,0.0M729.6,520.9l2.4,0.0M851.7,535.0l2.0,0.0M806.3,555.3l0.0,1.9M812.9,561.2l-1.5,1.5M734.4,528.4l1.9,1.9M809.6,504.0l1.0,0.0M718.1,511.5l0.0,1.9M865.9,598.4l2.2,0.0M810.0,544.2l0.0,2.1M742.8,516.2l-1.6,1.6M782.3,562.4l1.8,1.8M734.9,508.2l0.9,0.0M697.4,526.7l2.1,0.0M747.7,494.2l1.0,0.0M691.3,508.9l0.0,2.6M663.7,506.3l0.0,2.4M856.0,579.1l1.1,1.1M788.5,544.3l1.6,0.0M837.5,558.9l2.0,2.0M806.2,545.0l0.0,2.0M847.6,607.3l0.0,2.0M784.6,525.3l0.0,2.6M732.0,510.6l0.0,0.8M692.3,526.4l0.0,1.3M735.1,509.7l0.0,2.6M842.7,522.2l-0.7,0.7M677.1,488.2l0.0,2.3M821.7,558.8l2.6,0.0M654.7,492.8l0.0,1.6M826.4,553.5l0.0,1.0M776.9,522.6l2.7,0.0M808.8,537.6l2.8,0.0M816.3,516.6l-1.9,1.9M719.4,504.0l0.0,1.1M845.0,558.5l0.0,2.3M834.9,553.6l0.0,0.9M818.9,508.6l1.8,1.8M791.1,494.6l1.3,1.3M789.8,569.0l0.8,0.0M839.6,549.2l0.0,0.9M687.8,506.0l0.6,0.6M817.8,526.9l-1.5,1.5M836.9,579.8l1.2,1.2M846.2,567.3l-1.9,1.9M808.1,528.8l0.0,1.6M816.9,560.6l0.0,2.5M843.2,605.9l1.2,0.0M852.3,597.1l1.3,0.0M767.0,535.5l-1.9,1.9M764.4,509.4l0.9,0.0M762.5,509.3l1.1,0.0M816.5,556.0l0.0,2.3M789.9,551.5l2.0,0.0M858.0,544.2l-0.6,0.6M774.9,571.2l0.0,1.3M855.6,608.3l-1.4,1.4M765.9,516.0l0.7,0.7M724.9,519.6l2.0,2.0M830.8,557.4l1.9,0.0M844.9,549.6l2.3,0.0M857.9,614.2l-1.2,1.2M814.2,536.7l1.1,0.0M718.1,509.7l0.0,1.7M822.3,529.4l2.1,0.0M822.2,532.4l-1.7,1.7M816.8,574.4l1.2,0.0M729.0,497.8l2.4,0.0M862.0,530.4l2.5,0.0M685.7,509.6l0.0,1.9M835.7,578.6l0.0,2.0M736.9,518.3l-1.8,1.8M683.5,488.8l1.2,0.0M719.4,536.7l-0.8,0.8M799.7,564.2l0.9,0.0M784.0,547.6l2.7,0.0M782.8,542.5l0.0,2.5M821.8,536.0l0.0,2.2M814.1,527.4l-1.8,1.8M763.4,517.9l2.6,0.0M817.4,522.5l-0.9,0.9M724.5,537.9l1.0,0.0M723.8,532.3l2.7,0.0M777.8,546.2l-1.4,1.4M675.2,507.7l0.0,2.7M729.7,482.8l2.3,0.0M803.6,546.0l0.0,2.7M720.4,510.1l0.0,2.1M849.0,558.5l2.2,0.0M802.4,494.0l-0.6,0.6M699.4,539.1l2.5,0.0M829.0,548.2l1.3,0.0M751.1,511.5l1.3,0.0M692.6,506.8l0.0,2.4M769.3,522.1l1.8,1.8M858.8,535.2l-1.5,1.5M818.1,561.6l2.2,0.0M822.6,559.9l2.2,0.0M783.1,570.6l2.4,0.0M773.9,541.3l1.1,0.0M784.1,509.7l2.0,2.0M800.0,545.1l-1.2,1.2M850.0,531.0l2.3,0.0M716.7,530.9l2.6,0.0M786.3,535.8l-2.0,2.0M833.3,542.5l0.0,2.5M731.6,508.6l1.5,0.0M846.1,551.9l0.0,2.8M713.7,535.8l0.0,1.2M764.0,536.3l1.5,1.5M845.6,535.2l0.0,1.8M723.7,522.0l1.8,0.0M730.0,527.9l0.0,2.0M852.2,595.3l2.2,0.0M807.5,580.9l-0.8,0.8M791.5,505.3l1.0,0.0M706.4,512.2l1.5,0.0M837.5,515.7l0.6,0.6M733.2,530.7l1.1,1.1M725.2,528.7l0.0,2.2M798.9,510.1l0.0,1.2M801.1,539.9l2.6,0.0M768.2,503.4l1.1,0.0M721.6,516.2l-0.7,0.7M801.9,495.0l2.8,0.0M708.1,499.2l0.0,2.1M777.7,532.1l1.4,0.0M809.7,554.5l-1.8,1.8M845.0,594.4l0.0,2.8M718.0,533.1l1.6,0.0M733.5,536.0l1.1,0.0M735.1,539.6l0.0,1.5M760.2,497.4l0.0,1.3M655.6,495.1l1.7,1.7M691.0,517.5l2.0,2.0M733.8,503.4l0.0,1.8M670.3,489.4l1.0,1.0M754.9,510.2l2.4,0.0M867.0,601.1l0.0,2.7M729.0,483.0l0.8,0.0M688.5,508.5l-0.8,0.8M797.6,516.2l0.0,2.6M819.3,533.8l0.0,2.1M780.2,499.3l2.6,0.0M848.8,620.7l-1.5,1.5M837.6,607.0l0.0,2.2M788.8,516.9l1.7,1.7M809.6,579.2l0.0,2.4M792.3,544.3l1.7,0.0M812.6,512.8l-1.5,1.5M837.4,526.5l-0.8,0.8M768.2,497.2l0.0,1.8M841.1,606.4l2.8,0.0M844.6,607.0l0.0,1.2M711.6,510.4l1.8,0.0M697.3,524.3l1.1,0.0M749.5,517.4l0.0,1.1M745.1,540.3l-1.5,1.5M730.4,506.0l1.3,0.0M770.9,554.5l0.0,2.5M758.0,497.3l1.2,0.0M801.3,578.9l2.4,0.0M796.8,567.9l2.4,0.0M837.4,585.6l0.0,2.2M725.7,503.3l0.9,0.9M655.5,494.8l0.0,1.3M860.5,589.0l0.8,0.8M823.2,571.4l2.6,0.0M825.2,526.5l1.6,1.6M806.8,527.0l0.0,1.2M761.6,537.7l-1.6,1.6M803.6,569.6l0.7,0.7M840.0,613.9l1.3,1.3M660.2,503.5l0.0,1.6M838.8,592.3l1.7,1.7M708.2,515.6l-1.6,1.6M738.9,530.7l0.7,0.7M834.3,528.2l0.0,1.6M814.9,558.9l-1.0,1.0M773.4,510.6l0.0,1.9M671.0,491.7l1.1,0.0M762.3,514.8l-0.9,0.9M761.2,511.8l0.0,0.8M852.3,554.7l2.3,0.0M666.7,486.5l0.0,1.9M855.7,611.2l-1.0,1.0M833.7,551.9l1.1,1.1M807.8,557.6l-0.7,0.7M823.0,566.5l1.3,1.3M842.9,534.0l0.0,1.7M829.4,574.9l-1.5,1.5M859.2,627.0l0.9,0.0M721.9,520.5l0.0,2.6M844.6,518.1l2.6,0.0M849.1,614.8l2.1,0.0M805.8,527.2l1.1,1.1M767.8,525.8l0.0,1.4M712.2,505.8l0.0,1.4M775.9,520.6l1.2,1.2M775.0,508.7l1.3,1.3M854.4,581.8l0.0,1.9M730.7,522.2l1.8,0.0M754.4,501.6l-1.1,1.1M809.2,514.0l0.0,2.0M799.2,518.4l-1.6,1.6M832.7,578.3l1.9,1.9M796.9,522.3l1.6,0.0M738.2,527.3l-1.0,1.0M863.6,605.6l0.0,1.4M850.2,580.8l0.0,1.6M846.4,508.5l0.6,0.6M804.7,511.4l-1.4,1.4M794.3,566.2l-1.6,1.6M695.9,519.3l0.0,2.2M838.9,601.8l0.0,2.1M746.4,507.3l1.8,1.8M684.4,515.9l0.0,1.0M718.6,509.4l-1.9,1.9M850.9,522.6l0.7,0.7M800.3,574.7l0.0,1.7M853.2,574.0l1.7,1.7M689.4,519.8l1.3,1.3M844.9,534.5l0.0,2.1M750.1,514.4l1.0,0.0M832.3,558.1l0.0,0.9M716.2,485.1l0.0,0.8M707.9,542.6l1.8,1.8M694.7,516.9l0.0,0.9M716.5,495.9l-0.8,0.8M781.1,577.4l0.0,2.2M807.1,559.5l1.9,0.0M764.3,545.5l0.0,1.7M852.3,620.3l-1.9,1.9M804.3,581.8l1.0,1.0M799.1,528.3l0.0,1.0M834.6,606.4l0.9,0.9M860.7,626.9l1.6,1.6M743.8,538.1l1.4,1.4M812.8,504.8l0.0,2.7M719.8,536.6l1.9,0.0M802.8,548.9l2.4,0.0M713.5,509.7l0.0,1.2M815.9,505.9l1.6,0.0M664.9,505.1l-2.0,2.0M772.8,549.4l2.4,0.0M806.3,561.1l-1.3,1.3M857.3,627.0l2.3,0.0M860.2,531.5l0.0,1.3M756.1,531.7l0.0,2.0M859.0,545.7l0.0,2.5M820.9,534.0l2.5,0.0M818.2,569.9l0.0,2.5M656.0,492.9l-0.7,0.7M777.6,558.4l-1.1,1.1M697.2,513.9l0.0,1.1M706.9,539.5l0.0,2.4M753.2,512.3l-0.9,0.9M837.8,609.3l1.3,1.3M799.3,510.2l0.9,0.9M724.1,499.5l1.5,0.0M773.4,514.4l2.2,0.0M781.2,575.2l0.0,2.2M716.2,500.4l0.0,2.5M782.2,545.0l2.5,0.0M847.2,584.0l-1.2,1.2M787.9,519.3l1.3,0.0M698.7,514.9l0.0,2.5M844.2,539.7l1.9,0.0M767.1,524.2l0.0,1.7M850.3,538.0l0.0,2.1M843.4,556.7l0.0,1.2M716.3,527.2l0.0,1.6M827.1,566.7l-0.7,0.7M732.3,522.7l0.0,2.3M823.3,519.9l-1.7,1.7M803.1,563.5l-1.2,1.2M730.2,499.9l0.0,1.1M685.7,508.0l-1.3,1.3M851.3,552.6l2.8,0.0M732.7,493.3l2.1,0.0M771.4,512.9l-1.3,1.3M698.6,532.6l1.5,1.5M773.0,556.4l0.0,1.3M841.2,535.8l1.1,1.1M791.9,518.3l-1.3,1.3M671.3,493.2l2.1,0.0M716.6,541.5l2.5,0.0M698.4,512.0l1.0,0.0M775.4,555.9l1.2,1.2M708.3,526.5l-0.8,0.8M857.4,607.7l1.8,1.8M744.2,516.2l1.6,0.0M823.3,551.9l0.0,2.6M773.0,534.8l1.7,1.7M679.0,512.6l0.0,2.6M771.5,555.3l0.6,0.6M772.0,521.4l1.8,0.0M776.3,541.9l-0.9,0.9M743.5,512.5l0.0,1.1M794.1,523.3l0.0,2.3M713.2,491.9l-1.7,1.7M824.6,556.9l0.8,0.8M764.1,535.9l2.7,0.0M841.6,564.1l0.0,1.1M866.8,592.1l1.8,1.8M822.4,554.3l2.0,0.0M826.0,519.6l0.0,2.5M723.9,494.6l1.0,1.0M782.1,541.6l-1.4,1.4M732.4,525.2l-0.9,0.9M823.5,514.7l2.2,0.0M726.8,494.1l0.0,1.7M688.2,522.2l0.0,2.3M790.9,527.7l0.0,1.9M787.8,517.5l0.0,2.2M848.1,514.3l1.9,1.9M732.2,492.7l0.0,2.6M772.0,552.8l1.0,1.0M823.9,569.3l2.7,0.0M689.4,511.4l0.9,0.9M845.5,591.2l1.0,1.0M682.6,497.5l-0.9,0.9M819.9,572.2l-1.6,1.6M670.4,500.4l0.6,0.6M801.1,556.9l0.0,2.3M838.4,538.1l-1.5,1.5M862.6,580.7l0.0,2.3M839.2,552.0l-0.6,0.6M741.3,538.7l2.6,0.0M802.5,578.7l1.3,0.0M708.9,536.8l1.0,1.0M820.8,530.0l0.0,2.6M676.2,496.4l2.1,0.0M707.1,522.9l-1.7,1.7M767.1,515.0l0.0,2.1M770.9,499.2l1.4,1.4M868.2,591.4l2.6,0.0M790.4,547.4l1.4,0.0M864.1,540.6l-1.5,1.5M818.2,541.4l2.2,0.0M860.8,598.5l0.0,1.7M833.4,567.4l2.0,0.0M791.1,558.2l2.7,0.0M822.5,566.4l1.9,0.0M767.4,502.2l0.0,1.6M833.9,565.3l0.0,1.2M669.8,491.0l1.1,0.0M763.4,517.9l0.8,0.8M845.5,521.3l1.6,0.0M780.4,562.7l1.9,1.9M792.0,514.4l1.4,0.0M847.4,535.8l1.9,0.0M823.0,570.5l2.1,0.0M770.4,510.0l0.9,0.0M779.7,532.2l0.8,0.8M720.0,491.1l2.7,0.0M807.5,502.6l0.0,1.9M812.5,525.6l0.0,1.3M706.7,510.9l-1.6,1.6M718.4,512.7l1.1,0.0M798.0,495.6l0.0,2.0M855.8,620.0l2.1,0.0M760.7,537.7l0.0,1.9M759.9,505.0l0.0,1.4M830.2,547.6l0.7,0.7M843.5,520.1l0.0,1.6M787.3,568.3l2.1,0.0M770.8,513.4l0.0,1.5M683.6,508.5l1.9,1.9M728.2,489.5l-0.9,0.9M729.7,511.7l0.0,2.3M832.6,543.8l0.0,2.0M732.0,520.2l-1.4,1.4M684.3,499.3l1.7,0.0M827.6,537.4l0.9,0.0M856.0,591.3l0.0,1.8M735.8,489.8l-1.3,1.3M793.5,538.2l0.9,0.9M699.9,523.7l2.8,0.0M800.9,542.3l-1.1,1.1M785.4,502.2l1.6,0.0M846.7,580.2l1.1,0.0M797.4,568.0l0.8,0.8M747.0,527.6l0.0,1.0M850.8,605.4l-1.6,1.6M862.8,590.4l-1.7,1.7M711.2,498.3l1.4,0.0M812.4,566.3l2.6,0.0M731.5,525.7l1.2,1.2M717.3,511.3l0.0,2.4M738.0,509.9l0.6,0.6M786.7,568.7l0.0,1.4M865.2,596.1l-1.0,1.0M850.2,575.9l0.0,2.0M823.4,514.3l0.7,0.7M710.1,500.6l1.8,0.0M828.0,562.6l2.1,0.0M828.7,518.4l1.6,1.6M662.3,492.1l-0.9,0.9M823.3,543.0l-1.9,1.9M793.9,508.4l2.2,0.0M763.6,531.5l0.0,0.9M823.1,560.5l-1.3,1.3M774.6,533.8l2.4,0.0M809.1,532.7l0.8,0.8M681.6,495.0l1.1,0.0M722.2,477.5l-0.6,0.6M846.7,539.5l1.7,0.0M711.0,502.0l1.3,0.0M858.8,530.2l1.5,0.0M763.7,507.3l0.0,1.8M698.2,532.1l-0.9,0.9M848.3,607.9l0.0,2.4M838.5,534.4l2.7,0.0M846.0,518.0l1.6,0.0M863.2,612.0l-1.8,1.8M854.8,584.1l2.7,0.0M713.5,490.8l0.0,1.4M719.0,530.6l1.8,1.8M741.8,509.2l1.3,0.0M732.6,511.8l1.0,1.0M780.4,567.8l0.0,1.8M835.0,592.4l0.8,0.8M824.9,566.9l-0.6,0.6M787.6,564.3l0.0,2.0M865.0,584.3l1.3,0.0M762.0,536.4l1.4,0.0M830.0,525.0l2.4,0.0M828.7,548.3l0.0,2.3M843.5,509.6l2.3,0.0M826.4,568.2l0.0,2.4M821.7,549.6l-0.9,0.9M779.5,566.0l0.7,0.7M820.8,548.5l-1.5,1.5M850.1,510.7l1.5,1.5M748.3,504.1l0.0,2.2M776.7,567.0l-1.4,1.4M811.1,565.7l0.8,0.8M806.7,561.4l1.7,0.0M799.4,499.6l1.3,0.0M751.3,512.6l0.8,0.8M842.5,594.1l-1.4,1.4M686.3,499.2l2.8,0.0M793.1,569.0l1.8,1.8M749.4,518.2l0.0,2.3M843.2,534.7l0.0,1.1M782.6,573.4l0.0,2.7M856.7,529.7l1.8,1.8M792.8,579.5l2.5,0.0M717.6,492.5l-1.3,1.3M737.3,518.5l0.0,1.5M817.2,535.1l2.1,0.0M839.6,612.3l1.7,1.7M746.9,539.2l2.5,0.0M672.6,500.3l1.8,0.0M763.3,542.8l0.0,1.1M826.1,561.5l1.8,0.0M785.7,511.6l-1.8,1.8M843.2,602.7l1.5,0.0M773.7,498.0l1.8,1.8M753.4,539.1l0.0,0.8M841.6,607.4l0.0,2.5M843.6,581.9l0.0,1.1M818.3,570.8l0.0,1.2M661.5,504.1l0.0,1.2M727.1,505.2l1.3,1.3M747.1,511.8l0.0,2.3M729.4,534.0l0.0,1.5M767.9,506.6l-1.7,1.7M847.7,589.4l0.0,1.6M822.6,529.3l0.0,2.7M803.2,510.2l-1.8,1.8M844.7,617.7l2.5,0.0M764.1,508.6l1.7,0.0M786.0,510.3l1.9,1.9M752.0,514.6l1.8,0.0M856.3,531.5l0.9,0.0M760.1,536.5l0.0,1.7M791.7,535.4l-1.0,1.0M831.5,545.1l0.9,0.0M754.1,511.1l0.0,1.6M683.2,514.5l-1.0,1.0M789.0,513.5l1.6,1.6M734.7,523.3l-1.2,1.2M746.7,502.8l0.0,2.3M742.9,523.8l1.7,0.0M815.8,535.0l1.7,0.0M738.0,499.9l-1.0,1.0M736.0,512.5l0.0,1.9M668.8,501.4l2.2,0.0M843.6,559.2l-1.7,1.7M766.1,552.0l2.1,0.0M803.7,511.0l2.6,0.0M742.9,498.7l0.8,0.0M810.2,552.8l2.7,0.0M813.5,523.8l1.3,1.3M835.0,518.2l0.0,1.1M729.1,541.2l1.7,0.0M704.0,536.4l-0.9,0.9M796.3,503.0l0.9,0.0M679.6,488.0l0.0,2.3M851.2,496.1l0.8,-0.6M850.6,498.3l-0.3,0.4M850.9,495.9l-0.4,-0.0M850.6,497.0l-0.1,-0.4M861.8,488.2l-1.0,0.9M863.2,489.9l0.6,0.3M862.0,489.0l-0.4,0.9M861.9,489.8l-0.3,-0.6M868.1,486.9l-0.7,-0.6M868.5,485.8l0.6,-0.6M868.2,485.4l0.0,-0.9M868.8,485.7l0.7,0.7M880.1,468.5l0.0,0.6M879.6,469.1l-0.4,1.1M880.2,465.0l-1.0,-0.6M879.3,465.1l-0.1,-0.5M879.5,465.3l0.3,-0.7M879.6,464.6l-0.8,-0.8M898.4,485.2l-0.1,-0.8M896.3,485.4l0.9,-0.1M897.2,490.0l0.6,0.9M895.4,485.6l-0.1,0.2M898.7,487.1l-0.9,-0.6M895.7,489.5l0.1,-0.6M897.9,487.3l-0.7,-1.0M914.5,473.4l-0.9,0.8M912.7,475.4l-0.4,0.4M915.7,473.2l0.9,-0.4M914.1,473.9l0.1,0.4M914.9,473.6l0.5,0.9M913.7,473.6l-0.9,-1.1M916.0,474.3l-0.5,-1.1M915.2,475.6l-0.9,-1.0M914.3,475.5l0.3,-0.7M913.6,473.9l0.9,0.9M930.0,461.6l-1.0,0.9M928.8,460.2l1.0,-0.7M927.6,460.7l-1.2,1.0M929.1,458.6l0.5,1.1M928.0,461.4l-0.0,-0.9M930.3,458.7l-0.2,0.2M949.9,459.4l-0.0,0.3M951.4,457.1l-0.4,-0.4M950.0,457.0l-0.3,0.6M951.6,459.6l0.9,-0.7M957.8,437.9l0.3,0.4M956.9,438.6l0.9,-0.0M958.0,437.0l0.2,1.1M957.6,438.4l-1.2,-0.5M957.1,438.1l0.1,-0.3M975.2,432.6l1.1,0.9M975.7,434.6l1.0,0.9M974.1,432.2l-1.0,-1.2M974.3,433.3l0.5,-0.2M990.0,430.8l-0.2,-0.4M991.2,431.9l0.2,-0.9M991.0,431.1l-0.0,-0.6M990.6,430.6l0.2,1.2M1012.7,380.2l0.6,-0.8M1013.9,384.2l-0.6,0.2M1012.0,380.9l-0.6,-1.0M1012.1,383.4l0.4,0.3M1012.3,380.7l-0.5,-0.4M1013.3,380.0l-0.7,0.4M1026.7,411.0l0.8,-0.9M1025.1,413.0l0.2,-0.5M1025.5,412.2l1.2,-0.2M1028.1,414.0l-0.7,0.8M1027.0,411.6l0.9,-0.4M1024.2,413.7l0.1,-1.0M1044.6,411.8l-0.1,-0.8M1043.6,410.1l0.8,-0.0M1045.5,410.3l0.9,-0.2M1045.0,412.6l-0.6,0.7M1043.4,409.8l0.8,-0.4M1060.9,393.5l-0.9,0.8M1062.3,395.6l-0.5,0.1M1064.6,394.2l0.9,-0.8M1064.3,397.5l-0.5,-0.2M1064.1,394.9l-0.3,0.3M1063.6,398.4l1.2,0.9M1063.4,397.8l-1.1,-0.4M1060.6,395.7l0.8,-0.7M1080.0,409.4l1.0,0.9M1078.8,407.8l-0.3,-0.2M1081.3,406.3l0.1,0.8M1079.3,404.8l-0.7,0.1M1082.0,410.1l-0.3,0.3M1080.0,407.8l-1.1,0.8M1079.0,409.4l0.2,1.0M1079.4,406.8l-1.0,0.9M1095.0,391.2l-0.6,-0.1M1095.6,388.9l-0.7,-0.5M1095.8,388.9l-0.9,0.4M1096.6,389.6l0.4,-0.9M1135.2,401.6l-1.2,0.5M1135.9,404.1l0.6,0.9M1138.8,405.4l1.2,-0.2M1134.9,402.7l-0.9,0.2M1136.3,405.0l0.8,0.7M1137.3,402.6l0.0,-0.4M1135.7,402.8l-0.7,0.5M1032.3,391.4l-0.5,-1.0M1032.1,392.2l-0.2,-1.2M1030.5,391.8l-0.3,0.8M1030.5,391.9l-0.8,-1.1M1030.0,392.4l0.9,0.4M1112.0,399.1l0.3,-0.5M1113.3,399.8l1.0,-0.5M1113.8,400.3l-0.4,0.9M1109.7,400.4l-1.1,0.5M1110.0,399.1l-1.0,0.8M1111.9,400.0l0.1,0.7" fill="none" stroke="#fff" stroke-width="1.05"/><path d="M798.2,544.5 L839.8,554.6 L825.2,577.1 Z M817.5,559.7 H824 M820.7,556.5 V563" fill="none" stroke="#fff" stroke-width="0.9"/><path d="M1140.0,438.2 1150.0,448.2 M1155.2,457.0 1163.5,459.3 1175.2,464.0 1177.5,466.4 M1185.2,469.3 1202.2,476.9 1207.4,476.9 M1215.6,477.5 1228.0,484.0 1228.5,475.2 M1236.8,480.4 1243.2,485.7 1247.9,483.4 1258.4,486.1 M1266.7,485.7 1273.7,485.7 1284.2,489.8 1288.3,489.8 M1291.9,491.6 1303.0,493.3 1305.4,495.9 1311.2,494.3 M1310.6,502.1 1323.5,502.1 M1312.2,502.6 1316.1,512.0 1320.8,509.7 1321.6,502.6 M1331.7,497.4 1338.8,493.3 1339.4,486.3 1345.2,485.1 M1350.1,481.7 1358.0,481.7 1365.9,486.1 1372.4,486.8 M1380.3,486.8 1383.9,485.3 1389.7,489.7 1397.6,489.7 1401.2,494.0 1404.8,487.5 1409.8,484.6 1414.8,486.8 M1422.8,491.1 1437.9,498.3 1445.1,499.7 M1453.0,500.4 1458.0,502.2 1463.8,499.3 1475.3,499.3 M1483.2,499.7 1504.1,492.5 M1512.7,488.9 1534.3,488.9 1535.7,490.4 M1542.9,491.8 1545.8,493.3 1564.5,485.3 M1568.8,486.3 1576.0,488.2 1583.2,489.7 1594.8,483.2 M1602.9,479.0 1608.8,476.8 1625.0,476.8 M1633.1,477.5 1651.5,470.6 1654.4,470.6 M1662.5,472.1 1671.4,472.1 1684.6,468.0 M1692.7,466.2 1707.4,456.9 1714.8,455.5 M1722.8,453.6 1728.7,441.8 1738.3,437.1 M1746.4,436.3 1751.5,434.1 1768.5,434.1 M1775.8,433.4 1780.2,433.4 1789.8,428.3 1795.7,428.0 M1806.0,426.0 1814.8,424.6 1828.8,420.6 M1836.1,418.7 1841.3,418.0 1853.0,411.8 1858.9,414.7 M1866.3,415.0 1876.0,411.8 M1316.1,512.0 1315.3,518.3 1309.8,523.0 1306.7,529.3 1305.9,536.4 1308.3,538.8 M1305.1,520.7 1304.3,530.9 M1298.8,543.5 1294.1,547.4 1296.5,554.5 1289.4,562.4 M1305.1,546.6 1308.3,551.3 1302.0,552.9 1298.0,562.4 M1286.2,569.4 1283.1,571.8 1279.9,582.8 1282.3,589.1 1281.5,597.0 1276.8,603.3 1272.1,604.8 1271.3,609.6 M1295.7,571.0 1291.7,579.7 1286.2,581.2 1288.6,586.7 M1257.9,594.6 1267.4,600.9 1272.1,599.3 1276.0,593.0 M1234.3,600.1 1234.3,601.7 1239.8,601.7 1243.8,595.4 1246.9,593.8 1250.1,594.6 M1209.2,594.6 1223.3,597.0 1227.2,593.8 1228.8,594.6 M1204.4,599.3 1210.7,611.1 1218.6,622.1 1221.0,622.1 1222.5,619.0 1229.6,620.6 M1207.6,614.3 1215.5,617.4 M1233.5,620.6 1238.3,619.8 1243.8,624.5 1252.4,624.5 M1250.8,618.2 1259.5,622.9 1272.1,624.5 M1258.7,611.9 1264.2,622.1 1266.6,615.8" fill="none" stroke="#000" stroke-width="1.1" stroke-linejoin="round"/><text x="888.2" y="280" font-family="Liberation Serif" font-size="16.3" text-anchor="middle" fill="#000">0.2 m</text></svg>

<div class="abs" style="left:-10px;top:673px;width:515px;height:80px;background:rgba(255,255,255,0.72);border-top:2px solid #333;border-right:2px solid #000;border-bottom:3px solid #000"></div>
<svg class="abs" style="left:0;top:663px" width="520" height="90">
<path d="M17.5 33 H467.5 M17.5 22 V45.5 M242.5 22 V45.5 M467.5 22 V45.5" stroke="#000" stroke-width="2.5" fill="none"/>
<text x="18.5" y="75" font-family="Liberation Serif" font-size="20.2" text-anchor="middle">0.00 m</text>
<text x="243.5" y="75" font-family="Liberation Serif" font-size="20.2" text-anchor="middle">0.25 m</text>
<text x="468.5" y="75" font-family="Liberation Serif" font-size="20.2" text-anchor="middle">0.50 m</text>
</svg>

</div>

<div class="abs" style="left:0;top:125px;width:1876px;height:1px;background:#a6a9ae"></div><div class="abs" style="left:0;top:126px;width:1876px;height:1px;background:#85878b"></div><div class="abs" style="left:0;top:127px;width:1876px;height:1px;background:rgba(150,152,156,0.45)"></div>
<div class="abs" style="left:0;top:880px;width:1876px;height:2px;background:#f1f2f4"></div>
<div class="abs" style="left:0;top:882px;width:1876px;height:2px;background:#b2b6bd"></div>
<div class="abs" style="left:0;top:884px;width:1876px;height:6px;background:linear-gradient(#e6e8ec,#cbd0d8)"></div>
<div class="abs" style="left:1278px;top:885px;width:1px;height:5px;background:#9ea2a9"></div>
<div class="abs" style="left:1323px;top:885px;width:1px;height:5px;background:#9ea2a9"></div>
<div class="abs" style="left:1645px;top:885px;width:1px;height:5px;background:#9ea2a9"></div>

</body></html>
